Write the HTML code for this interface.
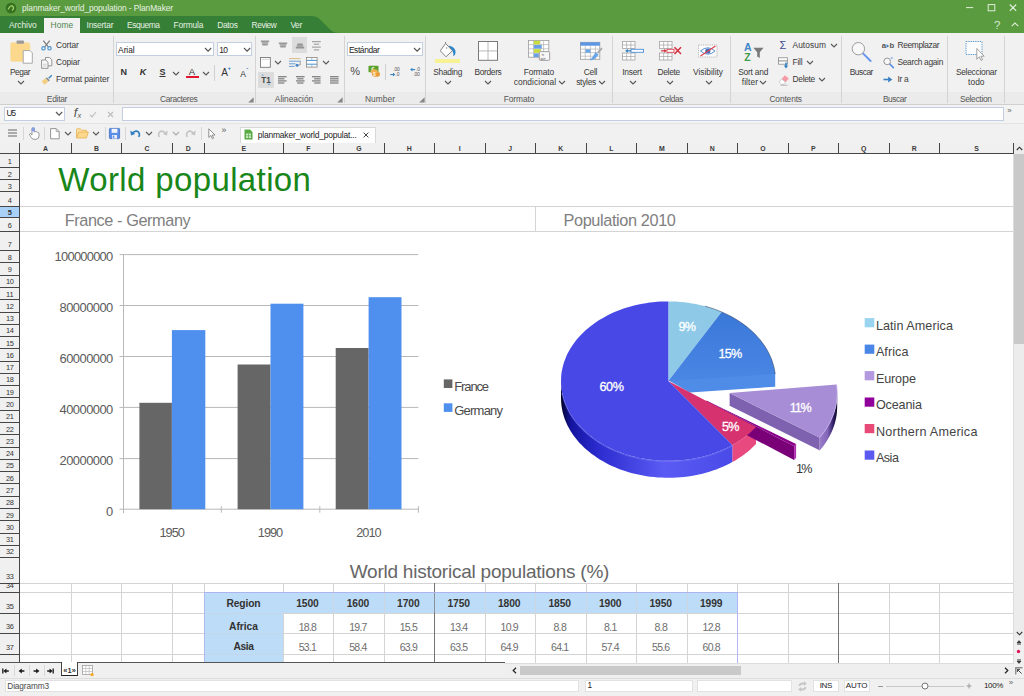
<!DOCTYPE html>
<html lang="es"><head><meta charset="utf-8"><title>planmaker_world_population - PlanMaker</title>
<style>
html,body{margin:0;padding:0}
body{width:1024px;height:696px;position:relative;overflow:hidden;background:#f0f0f0;font-family:"Liberation Sans",sans-serif}
.t{position:absolute;white-space:pre;margin:0}
.b{position:absolute;display:block}
svg{overflow:visible}
</style></head>
<body>
<div class="b" style="left:0px;top:142.5px;width:1024px;height:520.1px;background:#fff;"></div>
<div class="b" style="left:20px;top:206px;width:994px;height:1px;background:#d4d4d4;"></div>
<div class="b" style="left:20px;top:231px;width:994px;height:1px;background:#d4d4d4;"></div>
<div class="b" style="left:535px;top:206px;width:1px;height:25px;background:#d4d4d4;"></div>
<div class="b" style="left:20px;top:583px;width:994px;height:1px;background:#d4d4d4;"></div>
<div class="b" style="left:20px;top:592px;width:994px;height:1px;background:#d4d4d4;"></div>
<div class="b" style="left:20px;top:613px;width:994px;height:1px;background:#d4d4d4;"></div>
<div class="b" style="left:20px;top:633px;width:994px;height:1px;background:#d4d4d4;"></div>
<div class="b" style="left:20px;top:654px;width:994px;height:1px;background:#d4d4d4;"></div>
<div class="b" style="left:71px;top:583px;width:1px;height:79.60000000000002px;background:#d4d4d4;"></div>
<div class="b" style="left:121px;top:583px;width:1px;height:79.60000000000002px;background:#d4d4d4;"></div>
<div class="b" style="left:172px;top:583px;width:1px;height:79.60000000000002px;background:#d4d4d4;"></div>
<div class="b" style="left:204px;top:583px;width:1px;height:79.60000000000002px;background:#d4d4d4;"></div>
<div class="b" style="left:283px;top:583px;width:1px;height:79.60000000000002px;background:#d4d4d4;"></div>
<div class="b" style="left:333px;top:583px;width:1px;height:79.60000000000002px;background:#d4d4d4;"></div>
<div class="b" style="left:384px;top:583px;width:1px;height:79.60000000000002px;background:#d4d4d4;"></div>
<div class="b" style="left:434px;top:583px;width:1px;height:79.60000000000002px;background:#747474;"></div>
<div class="b" style="left:485px;top:583px;width:1px;height:79.60000000000002px;background:#d4d4d4;"></div>
<div class="b" style="left:535px;top:583px;width:1px;height:79.60000000000002px;background:#d4d4d4;"></div>
<div class="b" style="left:586px;top:583px;width:1px;height:79.60000000000002px;background:#d4d4d4;"></div>
<div class="b" style="left:636px;top:583px;width:1px;height:79.60000000000002px;background:#d4d4d4;"></div>
<div class="b" style="left:687px;top:583px;width:1px;height:79.60000000000002px;background:#d4d4d4;"></div>
<div class="b" style="left:737px;top:583px;width:1px;height:79.60000000000002px;background:#d4d4d4;"></div>
<div class="b" style="left:788px;top:583px;width:1px;height:79.60000000000002px;background:#d4d4d4;"></div>
<div class="b" style="left:838px;top:583px;width:1px;height:79.60000000000002px;background:#747474;"></div>
<div class="b" style="left:889px;top:583px;width:1px;height:79.60000000000002px;background:#d4d4d4;"></div>
<div class="b" style="left:939px;top:583px;width:1px;height:79.60000000000002px;background:#d4d4d4;"></div>
<div class="b" style="left:205px;top:592.5px;width:532px;height:20.5px;background:#bddcf8;"></div>
<div class="b" style="left:205px;top:592.5px;width:78px;height:70.1px;background:#bddcf8;"></div>
<div class="b" style="left:333px;top:593px;width:1px;height:20px;background:#ccd6e2;"></div>
<div class="b" style="left:384px;top:593px;width:1px;height:20px;background:#ccd6e2;"></div>
<div class="b" style="left:434px;top:593px;width:1px;height:20px;background:#8a8f98;"></div>
<div class="b" style="left:485px;top:593px;width:1px;height:20px;background:#ccd6e2;"></div>
<div class="b" style="left:535px;top:593px;width:1px;height:20px;background:#ccd6e2;"></div>
<div class="b" style="left:586px;top:593px;width:1px;height:20px;background:#ccd6e2;"></div>
<div class="b" style="left:636px;top:593px;width:1px;height:20px;background:#ccd6e2;"></div>
<div class="b" style="left:687px;top:593px;width:1px;height:20px;background:#ccd6e2;"></div>
<div class="b" style="left:205px;top:613px;width:78px;height:1px;background:#c4d6ea;"></div>
<div class="b" style="left:205px;top:633px;width:78px;height:1px;background:#c4d6ea;"></div>
<div class="b" style="left:205px;top:654px;width:78px;height:1px;background:#c4d6ea;"></div>
<div class="b" style="left:737px;top:592.5px;width:1px;height:70.1px;background:#b2b6f4;"></div>
<div class="b" style="left:204px;top:592px;width:534px;height:1px;background:#aeb4f2;"></div>
<div class="b" style="left:204px;top:592.5px;width:1px;height:70.1px;background:#aebcf0;"></div>
<div class="t" style="left:226.50px;top:596.60px;font-size:10.3px;line-height:14px;color:#333;letter-spacing:-0.151px;font-weight:700;">Region</div>
<div class="t" style="left:229.00px;top:620.20px;font-size:10.3px;line-height:14px;color:#333;letter-spacing:-0.031px;font-weight:700;">Africa</div>
<div class="t" style="left:233.50px;top:640.30px;font-size:10.3px;line-height:14px;color:#333;letter-spacing:-0.441px;font-weight:700;">Asia</div>
<div class="t" style="left:296.20px;top:596.60px;font-size:10.3px;line-height:14px;color:#333;letter-spacing:-0.105px;font-weight:700;">1500</div>
<div class="t" style="left:298.75px;top:619.70px;font-size:10.5px;line-height:15px;color:#6e6e6e;letter-spacing:-0.759px;">18.8</div>
<div class="t" style="left:298.75px;top:639.80px;font-size:10.5px;line-height:15px;color:#6e6e6e;letter-spacing:-0.759px;">53.1</div>
<div class="t" style="left:346.70px;top:596.60px;font-size:10.3px;line-height:14px;color:#333;letter-spacing:-0.105px;font-weight:700;">1600</div>
<div class="t" style="left:349.25px;top:619.70px;font-size:10.5px;line-height:15px;color:#6e6e6e;letter-spacing:-0.759px;">19.7</div>
<div class="t" style="left:349.25px;top:639.80px;font-size:10.5px;line-height:15px;color:#6e6e6e;letter-spacing:-0.759px;">58.4</div>
<div class="t" style="left:397.10px;top:596.60px;font-size:10.3px;line-height:14px;color:#333;letter-spacing:-0.105px;font-weight:700;">1700</div>
<div class="t" style="left:399.65px;top:619.70px;font-size:10.5px;line-height:15px;color:#6e6e6e;letter-spacing:-0.759px;">15.5</div>
<div class="t" style="left:399.65px;top:639.80px;font-size:10.5px;line-height:15px;color:#6e6e6e;letter-spacing:-0.759px;">63.9</div>
<div class="t" style="left:447.50px;top:596.60px;font-size:10.3px;line-height:14px;color:#333;letter-spacing:-0.105px;font-weight:700;">1750</div>
<div class="t" style="left:450.05px;top:619.70px;font-size:10.5px;line-height:15px;color:#6e6e6e;letter-spacing:-0.759px;">13.4</div>
<div class="t" style="left:450.05px;top:639.80px;font-size:10.5px;line-height:15px;color:#6e6e6e;letter-spacing:-0.759px;">63.5</div>
<div class="t" style="left:498.00px;top:596.60px;font-size:10.3px;line-height:14px;color:#333;letter-spacing:-0.105px;font-weight:700;">1800</div>
<div class="t" style="left:500.55px;top:619.70px;font-size:10.5px;line-height:15px;color:#6e6e6e;letter-spacing:-0.759px;">10.9</div>
<div class="t" style="left:500.55px;top:639.80px;font-size:10.5px;line-height:15px;color:#6e6e6e;letter-spacing:-0.759px;">64.9</div>
<div class="t" style="left:548.50px;top:596.60px;font-size:10.3px;line-height:14px;color:#333;letter-spacing:-0.105px;font-weight:700;">1850</div>
<div class="t" style="left:553.40px;top:619.70px;font-size:10.5px;line-height:15px;color:#6e6e6e;letter-spacing:-0.636px;">8.8</div>
<div class="t" style="left:551.05px;top:639.80px;font-size:10.5px;line-height:15px;color:#6e6e6e;letter-spacing:-0.759px;">64.1</div>
<div class="t" style="left:599.00px;top:596.60px;font-size:10.3px;line-height:14px;color:#333;letter-spacing:-0.105px;font-weight:700;">1900</div>
<div class="t" style="left:603.90px;top:619.70px;font-size:10.5px;line-height:15px;color:#6e6e6e;letter-spacing:-0.636px;">8.1</div>
<div class="t" style="left:601.55px;top:639.80px;font-size:10.5px;line-height:15px;color:#6e6e6e;letter-spacing:-0.759px;">57.4</div>
<div class="t" style="left:649.50px;top:596.60px;font-size:10.3px;line-height:14px;color:#333;letter-spacing:-0.105px;font-weight:700;">1950</div>
<div class="t" style="left:654.40px;top:619.70px;font-size:10.5px;line-height:15px;color:#6e6e6e;letter-spacing:-0.636px;">8.8</div>
<div class="t" style="left:652.05px;top:639.80px;font-size:10.5px;line-height:15px;color:#6e6e6e;letter-spacing:-0.759px;">55.6</div>
<div class="t" style="left:700.00px;top:596.60px;font-size:10.3px;line-height:14px;color:#333;letter-spacing:-0.105px;font-weight:700;">1999</div>
<div class="t" style="left:702.55px;top:619.70px;font-size:10.5px;line-height:15px;color:#6e6e6e;letter-spacing:-0.759px;">12.8</div>
<div class="t" style="left:702.55px;top:639.80px;font-size:10.5px;line-height:15px;color:#6e6e6e;letter-spacing:-0.759px;">60.8</div>
<div class="t" style="left:58.30px;top:158.50px;font-size:33px;line-height:42px;color:#188618;letter-spacing:0.371px;">World population</div>
<div class="t" style="left:64.70px;top:209.20px;font-size:16.3px;line-height:22px;color:#808080;letter-spacing:-0.407px;">France - Germany</div>
<div class="t" style="left:563.50px;top:209.20px;font-size:16.3px;line-height:22px;color:#808080;letter-spacing:-0.380px;">Population 2010</div>
<div class="t" style="left:349.70px;top:558.80px;font-size:19px;line-height:25px;color:#666;letter-spacing:-0.229px;">World historical populations (%)</div>
<div class="b" style="left:1013px;top:154px;width:1px;height:508.6px;background:#dcdcdc;"></div>
<div class="b" style="left:0px;top:142.5px;width:1024px;height:11px;background:#f0f0f0;"></div>
<div class="b" style="left:0px;top:153px;width:1024px;height:1px;background:#464646;"></div>
<div class="b" style="left:19px;top:142.5px;width:1px;height:11px;background:#464646;"></div>
<div class="b" style="left:71px;top:142.5px;width:1px;height:11px;background:#464646;"></div>
<div class="b" style="left:121px;top:142.5px;width:1px;height:11px;background:#464646;"></div>
<div class="b" style="left:172px;top:142.5px;width:1px;height:11px;background:#464646;"></div>
<div class="b" style="left:204px;top:142.5px;width:1px;height:11px;background:#464646;"></div>
<div class="b" style="left:283px;top:142.5px;width:1px;height:11px;background:#464646;"></div>
<div class="b" style="left:333px;top:142.5px;width:1px;height:11px;background:#464646;"></div>
<div class="b" style="left:384px;top:142.5px;width:1px;height:11px;background:#464646;"></div>
<div class="b" style="left:434px;top:142.5px;width:1px;height:11px;background:#464646;"></div>
<div class="b" style="left:485px;top:142.5px;width:1px;height:11px;background:#464646;"></div>
<div class="b" style="left:535px;top:142.5px;width:1px;height:11px;background:#464646;"></div>
<div class="b" style="left:586px;top:142.5px;width:1px;height:11px;background:#464646;"></div>
<div class="b" style="left:636px;top:142.5px;width:1px;height:11px;background:#464646;"></div>
<div class="b" style="left:687px;top:142.5px;width:1px;height:11px;background:#464646;"></div>
<div class="b" style="left:737px;top:142.5px;width:1px;height:11px;background:#464646;"></div>
<div class="b" style="left:788px;top:142.5px;width:1px;height:11px;background:#464646;"></div>
<div class="b" style="left:838px;top:142.5px;width:1px;height:11px;background:#464646;"></div>
<div class="b" style="left:889px;top:142.5px;width:1px;height:11px;background:#464646;"></div>
<div class="b" style="left:939px;top:142.5px;width:1px;height:11px;background:#464646;"></div>
<div class="b" style="left:1013px;top:142.5px;width:1px;height:11px;background:#464646;"></div>
<div class="t" style="left:43.06px;top:143.80px;font-size:6.9px;line-height:10px;color:#3a3a3a;font-weight:700;">A</div>
<div class="t" style="left:94.01px;top:143.80px;font-size:6.9px;line-height:10px;color:#3a3a3a;font-weight:700;">B</div>
<div class="t" style="left:144.41px;top:143.80px;font-size:6.9px;line-height:10px;color:#3a3a3a;font-weight:700;">C</div>
<div class="t" style="left:185.76px;top:143.80px;font-size:6.9px;line-height:10px;color:#3a3a3a;font-weight:700;">D</div>
<div class="t" style="left:241.45px;top:143.80px;font-size:6.9px;line-height:10px;color:#3a3a3a;font-weight:700;">E</div>
<div class="t" style="left:306.34px;top:143.80px;font-size:6.9px;line-height:10px;color:#3a3a3a;font-weight:700;">F</div>
<div class="t" style="left:356.26px;top:143.80px;font-size:6.9px;line-height:10px;color:#3a3a3a;font-weight:700;">G</div>
<div class="t" style="left:406.86px;top:143.80px;font-size:6.9px;line-height:10px;color:#3a3a3a;font-weight:700;">H</div>
<div class="t" style="left:458.79px;top:143.80px;font-size:6.9px;line-height:10px;color:#3a3a3a;font-weight:700;">I</div>
<div class="t" style="left:508.33px;top:143.80px;font-size:6.9px;line-height:10px;color:#3a3a3a;font-weight:700;">J</div>
<div class="t" style="left:558.26px;top:143.80px;font-size:6.9px;line-height:10px;color:#3a3a3a;font-weight:700;">K</div>
<div class="t" style="left:609.14px;top:143.80px;font-size:6.9px;line-height:10px;color:#3a3a3a;font-weight:700;">L</div>
<div class="t" style="left:658.88px;top:143.80px;font-size:6.9px;line-height:10px;color:#3a3a3a;font-weight:700;">M</div>
<div class="t" style="left:709.76px;top:143.80px;font-size:6.9px;line-height:10px;color:#3a3a3a;font-weight:700;">N</div>
<div class="t" style="left:760.16px;top:143.80px;font-size:6.9px;line-height:10px;color:#3a3a3a;font-weight:700;">O</div>
<div class="t" style="left:811.05px;top:143.80px;font-size:6.9px;line-height:10px;color:#3a3a3a;font-weight:700;">P</div>
<div class="t" style="left:861.06px;top:143.80px;font-size:6.9px;line-height:10px;color:#3a3a3a;font-weight:700;">Q</div>
<div class="t" style="left:911.81px;top:143.80px;font-size:6.9px;line-height:10px;color:#3a3a3a;font-weight:700;">R</div>
<div class="t" style="left:974.25px;top:143.80px;font-size:6.9px;line-height:10px;color:#3a3a3a;font-weight:700;">S</div>
<div class="b" style="left:0px;top:154px;width:19.5px;height:508.6px;background:#f0f0f0;"></div>
<div class="b" style="left:0px;top:206.5px;width:19.5px;height:11.2px;background:#a9d1f7;"></div>
<div class="b" style="left:19px;top:143px;width:1px;height:519.6px;background:#464646;"></div>
<div class="b" style="left:0px;top:167px;width:19.5px;height:1px;background:#464646;"></div>
<div class="b" style="left:0px;top:179px;width:19.5px;height:1px;background:#464646;"></div>
<div class="b" style="left:0px;top:191px;width:19.5px;height:1px;background:#464646;"></div>
<div class="b" style="left:0px;top:206px;width:19.5px;height:1px;background:#464646;"></div>
<div class="b" style="left:0px;top:217px;width:19.5px;height:1px;background:#464646;"></div>
<div class="b" style="left:0px;top:231px;width:19.5px;height:1px;background:#464646;"></div>
<div class="b" style="left:0px;top:250px;width:19.5px;height:1px;background:#464646;"></div>
<div class="b" style="left:0px;top:262px;width:19.5px;height:1px;background:#464646;"></div>
<div class="b" style="left:0px;top:275px;width:19.5px;height:1px;background:#464646;"></div>
<div class="b" style="left:0px;top:287px;width:19.5px;height:1px;background:#464646;"></div>
<div class="b" style="left:0px;top:299px;width:19.5px;height:1px;background:#464646;"></div>
<div class="b" style="left:0px;top:312px;width:19.5px;height:1px;background:#464646;"></div>
<div class="b" style="left:0px;top:324px;width:19.5px;height:1px;background:#464646;"></div>
<div class="b" style="left:0px;top:336px;width:19.5px;height:1px;background:#464646;"></div>
<div class="b" style="left:0px;top:348px;width:19.5px;height:1px;background:#464646;"></div>
<div class="b" style="left:0px;top:361px;width:19.5px;height:1px;background:#464646;"></div>
<div class="b" style="left:0px;top:373px;width:19.5px;height:1px;background:#464646;"></div>
<div class="b" style="left:0px;top:385px;width:19.5px;height:1px;background:#464646;"></div>
<div class="b" style="left:0px;top:397px;width:19.5px;height:1px;background:#464646;"></div>
<div class="b" style="left:0px;top:410px;width:19.5px;height:1px;background:#464646;"></div>
<div class="b" style="left:0px;top:422px;width:19.5px;height:1px;background:#464646;"></div>
<div class="b" style="left:0px;top:434px;width:19.5px;height:1px;background:#464646;"></div>
<div class="b" style="left:0px;top:447px;width:19.5px;height:1px;background:#464646;"></div>
<div class="b" style="left:0px;top:459px;width:19.5px;height:1px;background:#464646;"></div>
<div class="b" style="left:0px;top:471px;width:19.5px;height:1px;background:#464646;"></div>
<div class="b" style="left:0px;top:483px;width:19.5px;height:1px;background:#464646;"></div>
<div class="b" style="left:0px;top:496px;width:19.5px;height:1px;background:#464646;"></div>
<div class="b" style="left:0px;top:508px;width:19.5px;height:1px;background:#464646;"></div>
<div class="b" style="left:0px;top:520px;width:19.5px;height:1px;background:#464646;"></div>
<div class="b" style="left:0px;top:533px;width:19.5px;height:1px;background:#464646;"></div>
<div class="b" style="left:0px;top:545px;width:19.5px;height:1px;background:#464646;"></div>
<div class="b" style="left:0px;top:557px;width:19.5px;height:1px;background:#464646;"></div>
<div class="b" style="left:0px;top:583px;width:19.5px;height:1px;background:#464646;"></div>
<div class="b" style="left:0px;top:592px;width:19.5px;height:1px;background:#464646;"></div>
<div class="b" style="left:0px;top:613px;width:19.5px;height:1px;background:#464646;"></div>
<div class="b" style="left:0px;top:633px;width:19.5px;height:1px;background:#464646;"></div>
<div class="b" style="left:0px;top:654px;width:19.5px;height:1px;background:#464646;"></div>
<div class="t" style="left:7.64px;top:156.17px;font-size:7.4px;line-height:11px;color:#333;">1</div>
<div class="t" style="left:7.64px;top:168.60px;font-size:7.4px;line-height:11px;color:#333;">2</div>
<div class="t" style="left:7.64px;top:180.70px;font-size:7.4px;line-height:11px;color:#333;">3</div>
<div class="t" style="left:7.64px;top:194.83px;font-size:7.4px;line-height:11px;color:#333;">4</div>
<div class="t" style="left:7.64px;top:206.60px;font-size:7.4px;line-height:11px;color:#333;font-weight:700;">5</div>
<div class="t" style="left:7.64px;top:220.12px;font-size:7.4px;line-height:11px;color:#333;">6</div>
<div class="t" style="left:7.64px;top:238.52px;font-size:7.4px;line-height:11px;color:#333;">7</div>
<div class="t" style="left:7.64px;top:251.68px;font-size:7.4px;line-height:11px;color:#333;">8</div>
<div class="t" style="left:7.64px;top:263.96px;font-size:7.4px;line-height:11px;color:#333;">9</div>
<div class="t" style="left:6.00px;top:276.24px;font-size:7.4px;line-height:11px;color:#333;letter-spacing:-0.417px;">10</div>
<div class="t" style="left:6.00px;top:288.52px;font-size:7.4px;line-height:11px;color:#333;letter-spacing:-0.136px;">11</div>
<div class="t" style="left:6.00px;top:300.80px;font-size:7.4px;line-height:11px;color:#333;letter-spacing:-0.417px;">12</div>
<div class="t" style="left:6.00px;top:313.08px;font-size:7.4px;line-height:11px;color:#333;letter-spacing:-0.417px;">13</div>
<div class="t" style="left:6.00px;top:325.36px;font-size:7.4px;line-height:11px;color:#333;letter-spacing:-0.417px;">14</div>
<div class="t" style="left:6.00px;top:337.64px;font-size:7.4px;line-height:11px;color:#333;letter-spacing:-0.417px;">15</div>
<div class="t" style="left:6.00px;top:349.92px;font-size:7.4px;line-height:11px;color:#333;letter-spacing:-0.417px;">16</div>
<div class="t" style="left:6.00px;top:362.20px;font-size:7.4px;line-height:11px;color:#333;letter-spacing:-0.417px;">17</div>
<div class="t" style="left:6.00px;top:374.48px;font-size:7.4px;line-height:11px;color:#333;letter-spacing:-0.417px;">18</div>
<div class="t" style="left:6.00px;top:386.76px;font-size:7.4px;line-height:11px;color:#333;letter-spacing:-0.417px;">19</div>
<div class="t" style="left:6.00px;top:399.04px;font-size:7.4px;line-height:11px;color:#333;letter-spacing:-0.417px;">20</div>
<div class="t" style="left:6.00px;top:411.32px;font-size:7.4px;line-height:11px;color:#333;letter-spacing:-0.417px;">21</div>
<div class="t" style="left:6.00px;top:423.60px;font-size:7.4px;line-height:11px;color:#333;letter-spacing:-0.417px;">22</div>
<div class="t" style="left:6.00px;top:435.88px;font-size:7.4px;line-height:11px;color:#333;letter-spacing:-0.417px;">23</div>
<div class="t" style="left:6.00px;top:448.16px;font-size:7.4px;line-height:11px;color:#333;letter-spacing:-0.417px;">24</div>
<div class="t" style="left:6.00px;top:460.44px;font-size:7.4px;line-height:11px;color:#333;letter-spacing:-0.417px;">25</div>
<div class="t" style="left:6.00px;top:472.72px;font-size:7.4px;line-height:11px;color:#333;letter-spacing:-0.417px;">26</div>
<div class="t" style="left:6.00px;top:485.00px;font-size:7.4px;line-height:11px;color:#333;letter-spacing:-0.417px;">27</div>
<div class="t" style="left:6.00px;top:497.28px;font-size:7.4px;line-height:11px;color:#333;letter-spacing:-0.417px;">28</div>
<div class="t" style="left:6.00px;top:509.56px;font-size:7.4px;line-height:11px;color:#333;letter-spacing:-0.417px;">29</div>
<div class="t" style="left:6.00px;top:521.84px;font-size:7.4px;line-height:11px;color:#333;letter-spacing:-0.417px;">30</div>
<div class="t" style="left:6.00px;top:534.12px;font-size:7.4px;line-height:11px;color:#333;letter-spacing:-0.417px;">31</div>
<div class="t" style="left:6.00px;top:546.40px;font-size:7.4px;line-height:11px;color:#333;letter-spacing:-0.417px;">32</div>
<div class="t" style="left:6.00px;top:570.53px;font-size:7.4px;line-height:11px;color:#333;letter-spacing:-0.417px;">33</div>
<div class="t" style="left:6.00px;top:579.60px;font-size:7.4px;line-height:11px;color:#333;letter-spacing:-0.417px;">34</div>
<div class="t" style="left:6.00px;top:600.81px;font-size:7.4px;line-height:11px;color:#333;letter-spacing:-0.417px;">35</div>
<div class="t" style="left:6.00px;top:621.33px;font-size:7.4px;line-height:11px;color:#333;letter-spacing:-0.417px;">36</div>
<div class="t" style="left:6.00px;top:641.92px;font-size:7.4px;line-height:11px;color:#333;letter-spacing:-0.417px;">37</div>
<svg class="b" style="left:0;top:0" width="1024" height="696" viewBox="0 0 1024 696"><path d="M119.5 254.6 H418.4" stroke="#b8b8b8" stroke-width="1"/><text x="113.2" y="261.0" font-family="Liberation Sans, sans-serif" font-size="12.9" fill="#5c5c5c" text-anchor="end" textLength="58.6" lengthAdjust="spacing">100000000</text><path d="M119.5 305.5 H418.4" stroke="#b8b8b8" stroke-width="1"/><text x="113.2" y="311.9" font-family="Liberation Sans, sans-serif" font-size="12.9" fill="#5c5c5c" text-anchor="end" textLength="53.6" lengthAdjust="spacing">80000000</text><path d="M119.5 356.5 H418.4" stroke="#b8b8b8" stroke-width="1"/><text x="113.2" y="362.9" font-family="Liberation Sans, sans-serif" font-size="12.9" fill="#5c5c5c" text-anchor="end" textLength="53.6" lengthAdjust="spacing">60000000</text><path d="M119.5 407.4 H418.4" stroke="#b8b8b8" stroke-width="1"/><text x="113.2" y="413.79999999999995" font-family="Liberation Sans, sans-serif" font-size="12.9" fill="#5c5c5c" text-anchor="end" textLength="53.6" lengthAdjust="spacing">40000000</text><path d="M119.5 458.6 H418.4" stroke="#b8b8b8" stroke-width="1"/><text x="113.2" y="465.0" font-family="Liberation Sans, sans-serif" font-size="12.9" fill="#5c5c5c" text-anchor="end" textLength="53.6" lengthAdjust="spacing">20000000</text><path d="M119.5 509.2 H418.4" stroke="#b8b8b8" stroke-width="1"/><text x="113.2" y="515.6" font-family="Liberation Sans, sans-serif" font-size="12.9" fill="#5c5c5c" text-anchor="end" textLength="6.4" lengthAdjust="spacing">0</text><path d="M123.5 254.6 V513.2" stroke="#b8b8b8" stroke-width="1"/><path d="M221.3 506.2 V512.7" stroke="#b8b8b8" stroke-width="1"/><path d="M319.8 506.2 V512.7" stroke="#b8b8b8" stroke-width="1"/><path d="M418.4 506.2 V512.7" stroke="#b8b8b8" stroke-width="1"/><rect x="139.4" y="402.8" width="32.5" height="106.4" fill="#666666"/><rect x="171.9" y="330.1" width="33.4" height="179.1" fill="#4f8fee"/><rect x="237.6" y="364.5" width="32.9" height="144.7" fill="#666666"/><rect x="270.5" y="303.7" width="32.9" height="205.5" fill="#4f8fee"/><rect x="335.7" y="348" width="32.9" height="161.2" fill="#666666"/><rect x="368.6" y="297.2" width="32.9" height="212.0" fill="#4f8fee"/><text x="172.20000000000002" y="537.3" font-family="Liberation Sans, sans-serif" font-size="12.8" fill="#5c5c5c" text-anchor="middle" textLength="25.4" lengthAdjust="spacing">1950</text><text x="270.5" y="537.3" font-family="Liberation Sans, sans-serif" font-size="12.8" fill="#5c5c5c" text-anchor="middle" textLength="25.4" lengthAdjust="spacing">1990</text><text x="368.90000000000003" y="537.3" font-family="Liberation Sans, sans-serif" font-size="12.8" fill="#5c5c5c" text-anchor="middle" textLength="25.4" lengthAdjust="spacing">2010</text><rect x="443.8" y="379.4" width="8.6" height="8.6" fill="#666666"/><text x="454.3" y="390.6" font-family="Liberation Sans, sans-serif" font-size="13" fill="#4a4a4a" textLength="34.8" lengthAdjust="spacing">France</text><rect x="443.8" y="403.3" width="8.6" height="8.6" fill="#4f8fee"/><text x="454.3" y="414.6" font-family="Liberation Sans, sans-serif" font-size="13" fill="#4a4a4a" textLength="48.7" lengthAdjust="spacing">Germany</text><defs><linearGradient id="gAsia" x1="0" x2="1" y1="0" y2="0"><stop offset="0" stop-color="#02022c"/><stop offset="0.06" stop-color="#1414a0"/><stop offset="0.22" stop-color="#2c2cd0"/><stop offset="0.6" stop-color="#5a5af4"/><stop offset="1" stop-color="#4a4ae8"/></linearGradient><linearGradient id="gEu" x1="0" x2="1" y1="0" y2="0"><stop offset="0" stop-color="#9a7ccc"/><stop offset="0.45" stop-color="#8466b8"/><stop offset="0.8" stop-color="#2a1a60"/><stop offset="1" stop-color="#08041c"/></linearGradient><linearGradient id="gAfT" x1="0" x2="0" y1="0" y2="1"><stop offset="0" stop-color="#3a78d8"/><stop offset="1" stop-color="#4a86e4"/></linearGradient></defs><path d="M668.3 380.3 L775.2 373.1 L775.2 386.7 L689.9 392.4 Z" fill="#4f8ce8" /><path d="M668.3 381.1 L668.3 301.4 L672.3 301.5 L676.3 301.6 L680.2 301.9 L684.2 302.3 L688.1 302.8 L692.0 303.4 L695.9 304.1 L699.7 304.9 L703.5 305.8 L707.3 306.8 L710.9 308.0 L714.6 309.2 L718.1 310.5 L721.6 311.9 Z" fill="#8ecae8" /><path d="M668.3 381.1 L721.6 311.9 L724.9 313.4 L728.1 314.9 L731.2 316.5 L734.3 318.3 L737.2 320.0 L740.1 321.9 L742.9 323.8 L745.6 325.8 L748.2 327.9 L750.7 330.1 L753.1 332.3 L755.4 334.5 L757.5 336.9 L759.6 339.2 L761.6 341.7 L763.4 344.2 L765.1 346.7 L766.7 349.3 L768.1 351.9 L769.5 354.5 L770.7 357.2 L771.8 360.0 L772.7 362.7 L773.5 365.5 L774.2 368.3 L774.7 371.1 L775.2 373.9 Z" fill="url(#gAfT)" /><path d="M705.0 306.2 L708.5 307.2 L712.0 308.3 L715.5 309.5 L718.8 310.8 L722.2 312.2 L725.4 313.6 L728.6 315.2 L731.7 316.8 L734.7 318.5 L737.6 320.3 L740.5 322.1 L743.2 324.1 L745.9 326.1 L748.5 328.1 L750.9 330.3 L753.3 332.5 L755.6 334.7 L757.7 337.1 L759.8 339.4 L761.7 341.9 L763.5 344.3 L765.2 346.9 L766.8 349.4 L768.2 352.0 L769.5 354.7 L770.7 357.3 L771.8 360.0 L772.7 362.8 L773.5 365.5 L774.2 368.3 L774.7 371.1 L775.2 373.9" fill="none" stroke="#1a2a50" stroke-width="0.7" opacity="0.7"/><path d="M756.0 427.0 L753.7 429.3 L751.4 431.5 L749.0 433.7 L746.4 435.7 L743.8 437.8 L741.0 439.7 L738.2 441.6 L735.3 443.4 L732.3 445.1 L732.3 462.1 L735.3 460.4 L738.2 458.6 L741.0 456.7 L743.8 454.8 L746.4 452.7 L749.0 450.7 L751.4 448.5 L753.7 446.3 L756.0 444.0 Z" fill="#e84a80" /><path d="M732.3 445.1 L729.2 446.7 L726.1 448.3 L722.9 449.7 L719.6 451.1 L716.3 452.4 L712.9 453.6 L709.4 454.7 L705.9 455.7 L702.4 456.7 L698.8 457.5 L695.2 458.3 L691.5 458.9 L687.8 459.5 L684.1 459.9 L680.4 460.3 L676.6 460.6 L672.9 460.7 L669.1 460.8 L665.3 460.8 L661.6 460.6 L657.8 460.4 L654.1 460.1 L650.4 459.7 L646.7 459.2 L643.0 458.6 L639.4 457.8 L635.8 457.0 L632.2 456.2 L628.7 455.2 L625.2 454.1 L621.8 452.9 L618.4 451.7 L615.1 450.3 L611.9 448.9 L608.7 447.4 L605.6 445.8 L602.6 444.1 L599.7 442.4 L596.8 440.5 L594.1 438.6 L591.4 436.7 L588.8 434.6 L586.3 432.5 L584.0 430.4 L581.7 428.1 L579.5 425.9 L577.5 423.5 L575.5 421.1 L573.7 418.7 L572.0 416.2 L570.4 413.7 L568.9 411.1 L567.5 408.5 L566.3 405.8 L565.2 403.2 L564.2 400.5 L563.4 397.7 L562.6 395.0 L562.1 392.2 L561.6 389.5 L561.3 386.7 L561.1 383.9 L561.0 381.1 L561.0 398.1 L561.1 400.9 L561.3 403.7 L561.6 406.5 L562.1 409.2 L562.6 412.0 L563.4 414.7 L564.2 417.5 L565.2 420.2 L566.3 422.8 L567.5 425.5 L568.9 428.1 L570.4 430.7 L572.0 433.2 L573.7 435.7 L575.5 438.1 L577.5 440.5 L579.5 442.9 L581.7 445.1 L584.0 447.4 L586.3 449.5 L588.8 451.6 L591.4 453.7 L594.1 455.6 L596.8 457.5 L599.7 459.4 L602.6 461.1 L605.6 462.8 L608.7 464.4 L611.9 465.9 L615.1 467.3 L618.4 468.7 L621.8 469.9 L625.2 471.1 L628.7 472.2 L632.2 473.2 L635.8 474.0 L639.4 474.8 L643.0 475.6 L646.7 476.2 L650.4 476.7 L654.1 477.1 L657.8 477.4 L661.6 477.6 L665.3 477.8 L669.1 477.8 L672.9 477.7 L676.6 477.6 L680.4 477.3 L684.1 476.9 L687.8 476.5 L691.5 475.9 L695.2 475.3 L698.8 474.5 L702.4 473.7 L705.9 472.7 L709.4 471.7 L712.9 470.6 L716.3 469.4 L719.6 468.1 L722.9 466.7 L726.1 465.3 L729.2 463.7 L732.3 462.1 Z" fill="url(#gAsia)" /><path d="M706.4 400.4 L794.1 446.3 L794.1 459.9 L706.4 414.0 Z" fill="#7a0078" /><path d="M796.1 444.1 L794.1 446.3 L794.1 459.9 L796.1 457.7 Z" fill="#b030b0" /><path d="M706.4 400.4 L796.1 444.1 L794.1 446.3 Z" fill="#8a008a" /><path d="M668.3 381.1 L756.0 427.0 L753.7 429.3 L751.4 431.5 L749.0 433.7 L746.4 435.7 L743.8 437.8 L741.0 439.7 L738.2 441.6 L735.3 443.4 L732.3 445.1 Z" fill="#d63270" /><path d="M668.3 381.1 L732.3 445.1 L729.2 446.7 L726.1 448.3 L722.9 449.7 L719.6 451.1 L716.3 452.4 L712.9 453.6 L709.5 454.7 L706.0 455.7 L702.4 456.7 L698.9 457.5 L695.2 458.2 L691.6 458.9 L687.9 459.5 L684.2 459.9 L680.5 460.3 L676.7 460.6 L673.0 460.7 L669.2 460.8 L665.5 460.8 L661.7 460.7 L658.0 460.4 L654.3 460.1 L650.5 459.7 L646.8 459.2 L643.2 458.6 L639.5 457.9 L635.9 457.1 L632.4 456.2 L628.9 455.2 L625.4 454.2 L622.0 453.0 L618.6 451.7 L615.3 450.4 L612.1 449.0 L608.9 447.5 L605.8 445.9 L602.8 444.2 L599.9 442.5 L597.0 440.7 L594.3 438.8 L591.6 436.8 L589.0 434.8 L586.5 432.7 L584.2 430.6 L581.9 428.3 L579.7 426.1 L577.6 423.7 L575.7 421.4 L573.8 418.9 L572.1 416.4 L570.5 413.9 L569.0 411.4 L567.7 408.8 L566.4 406.1 L565.3 403.5 L564.3 400.8 L563.5 398.1 L562.7 395.3 L562.1 392.6 L561.6 389.8 L561.3 387.0 L561.1 384.2 L561.0 381.4 L561.1 378.7 L561.2 375.9 L561.5 373.1 L562.0 370.3 L562.6 367.6 L563.3 364.8 L564.1 362.1 L565.1 359.4 L566.1 356.7 L567.3 354.1 L568.7 351.5 L570.1 348.9 L571.7 346.4 L573.4 343.9 L575.2 341.5 L577.1 339.1 L579.2 336.7 L581.3 334.4 L583.6 332.2 L585.9 330.0 L588.4 327.9 L590.9 325.9 L593.6 323.9 L596.3 322.0 L599.2 320.1 L602.1 318.4 L605.1 316.7 L608.2 315.1 L611.3 313.6 L614.5 312.1 L617.8 310.8 L621.1 309.5 L624.5 308.3 L628.0 307.2 L631.5 306.2 L635.1 305.3 L638.6 304.5 L642.3 303.8 L645.9 303.2 L649.6 302.6 L653.3 302.2 L657.1 301.8 L660.8 301.6 L664.5 301.4 L668.3 301.4 Z" fill="#4848e6" /><path d="M732.3 445.9 L729.2 447.5 L726.1 449.1 L722.9 450.5 L719.6 451.9 L716.3 453.2 L712.9 454.4 L709.4 455.5 L705.9 456.5 L702.4 457.5 L698.8 458.3 L695.1 459.1 L691.5 459.7 L687.8 460.3 L684.1 460.7 L680.3 461.1 L676.6 461.4 L672.8 461.5 L669.1 461.6 L665.3 461.6 L661.6 461.4 L657.8 461.2 L654.1 460.9 L650.3 460.5 L646.6 460.0 L643.0 459.3 L639.3 458.6 L635.7 457.8 L632.2 456.9 L628.6 456.0 L625.2 454.9 L621.7 453.7 L618.4 452.4 L615.1 451.1 L611.8 449.7 L608.7 448.2 L605.6 446.6 L602.6 444.9 L599.6 443.1 L596.8 441.3 L594.0 439.4 L591.4 437.4 L588.8 435.4 L586.3 433.3 L583.9 431.1 L581.6 428.9 L579.5 426.6 L577.4 424.3 L575.5 421.9 L573.6 419.4 L571.9 417.0 L570.3 414.4 L568.9 411.8 L567.5 409.2 L566.3 406.6 L565.2 403.9 L564.2 401.2 L563.4 398.5 L562.6 395.8 L562.0 393.0" fill="none" stroke="#7a7af8" stroke-width="1" opacity="0.6"/><path d="M837.2 393.1 L837.1 396.0 L836.9 399.0 L836.6 401.9 L836.1 404.8 L835.4 407.7 L834.7 410.6 L833.7 413.5 L832.7 416.3 L831.5 419.1 L830.2 421.9 L828.7 424.6 L827.1 427.3 L825.4 429.9 L823.6 432.5 L821.6 435.1 L819.5 437.6 L819.5 450.8 L821.6 448.3 L823.6 445.7 L825.4 443.1 L827.1 440.5 L828.7 437.8 L830.2 435.1 L831.5 432.3 L832.7 429.5 L833.7 426.7 L834.7 423.8 L835.4 420.9 L836.1 418.0 L836.6 415.1 L836.9 412.2 L837.1 409.2 L837.2 406.3 Z" fill="url(#gEu)" /><path d="M729.6 393.1 L819.5 437.6 L819.5 450.2 L729.6 405.7 Z" fill="#7e62b0" /><path d="M729.6 393.1 L836.6 384.6 L836.9 387.5 L837.1 390.5 L837.2 393.4 L837.1 396.3 L836.9 399.2 L836.5 402.1 L836.0 405.0 L835.4 407.9 L834.6 410.8 L833.7 413.6 L832.6 416.4 L831.4 419.2 L830.1 422.0 L828.7 424.7 L827.1 427.4 L825.4 430.0 L823.6 432.6 L821.6 435.1 L819.5 437.6 Z" fill="#a78cd6" /><path d="M836.6 384.6 L836.9 387.5 L837.1 390.5 L837.2 393.4 L837.1 396.3 L836.9 399.2 L836.5 402.1 L836.0 405.0 L835.4 407.9 L834.6 410.8 L833.7 413.6 L832.6 416.4 L831.4 419.2 L830.1 422.0 L828.7 424.7 L827.1 427.4 L825.4 430.0 L823.6 432.6 L821.6 435.1 L819.5 437.6" fill="none" stroke="#c8b4ec" stroke-width="0.8"/><text x="687.3" y="331" font-family="Liberation Sans, sans-serif" font-size="12.6" fill="#ffffff" text-anchor="middle" stroke="#ffffff" stroke-width="0.3" textLength="17.4" lengthAdjust="spacing">9%</text><text x="730.4" y="358" font-family="Liberation Sans, sans-serif" font-size="12.6" fill="#ffffff" text-anchor="middle" stroke="#ffffff" stroke-width="0.3" textLength="23.8" lengthAdjust="spacing">15%</text><text x="800.8" y="411.9" font-family="Liberation Sans, sans-serif" font-size="12.6" fill="#ffffff" text-anchor="middle" stroke="#ffffff" stroke-width="0.3" textLength="22" lengthAdjust="spacing">11%</text><text x="730.8" y="431" font-family="Liberation Sans, sans-serif" font-size="12.6" fill="#ffffff" text-anchor="middle" stroke="#ffffff" stroke-width="0.3" textLength="17.4" lengthAdjust="spacing">5%</text><text x="611.7" y="390.8" font-family="Liberation Sans, sans-serif" font-size="12.6" fill="#ffffff" text-anchor="middle" stroke="#ffffff" stroke-width="0.3" textLength="24.6" lengthAdjust="spacing">60%</text><text x="796" y="473.2" font-family="Liberation Sans, sans-serif" font-size="12.6" fill="#333" textLength="5.6" lengthAdjust="spacing">1</text><text x="801.2" y="473.2" font-family="Liberation Sans, sans-serif" font-size="12.6" fill="#333" textLength="10.6" lengthAdjust="spacing">%</text><rect x="864.7" y="318.1" width="9.6" height="9.2" fill="#9ad4f0"/><text x="875.9" y="329.8" font-family="Liberation Sans, sans-serif" font-size="12.6" fill="#444" textLength="77" lengthAdjust="spacing">Latin America</text><rect x="864.7" y="344.6" width="9.6" height="9.2" fill="#4a86e6"/><text x="875.9" y="356.28000000000003" font-family="Liberation Sans, sans-serif" font-size="12.6" fill="#444" textLength="32.5" lengthAdjust="spacing">Africa</text><rect x="864.7" y="371.1" width="9.6" height="9.2" fill="#b39ae0"/><text x="875.9" y="382.76" font-family="Liberation Sans, sans-serif" font-size="12.6" fill="#444" textLength="40" lengthAdjust="spacing">Europe</text><rect x="864.7" y="397.5" width="9.6" height="9.2" fill="#90009a"/><text x="875.9" y="409.24" font-family="Liberation Sans, sans-serif" font-size="12.6" fill="#444" textLength="46" lengthAdjust="spacing">Oceania</text><rect x="864.7" y="424.0" width="9.6" height="9.2" fill="#e84a78"/><text x="875.9" y="435.72" font-family="Liberation Sans, sans-serif" font-size="12.6" fill="#444" textLength="101.5" lengthAdjust="spacing">Northern America</text><rect x="864.7" y="450.5" width="9.6" height="9.2" fill="#5a5af0"/><text x="875.9" y="462.2" font-family="Liberation Sans, sans-serif" font-size="12.6" fill="#444" textLength="23" lengthAdjust="spacing">Asia</text></svg>
<div class="b" style="left:0px;top:0px;width:1024px;height:33px;background:#5a9b3f;"></div>
<svg class="b" style="left:0px;top:16px;" width="345" height="18" viewBox="0 0 345 18"><path d="M0 0 L311 0 Q316.5 0 319.5 3 L330.5 14 Q333.5 17 339 17 L0 17 Z" fill="#357f36"/></svg>
<svg class="b" style="left:5.2px;top:1.8px;" width="12" height="12" viewBox="0 0 12 12"><circle cx="6" cy="6" r="5.3" fill="#34701f"/><path d="M3 7.5 Q6 2 8 4.5 Q9.5 6.5 7 8.5" fill="none" stroke="#9ccc65" stroke-width="1.3"/></svg>
<div class="t" style="left:22.00px;top:2.30px;font-size:8.4px;line-height:12px;color:#e9f2e4;letter-spacing:-0.094px;">planmaker_world_population - PlanMaker</div>
<svg class="b" style="left:964px;top:3px;" width="56" height="10" viewBox="0 0 56 10"><path d="M2 4.6 H9.2" stroke="#e0eeda" stroke-width="1"/><rect x="24.2" y="1.6" width="6.6" height="6.2" fill="none" stroke="#e0eeda" stroke-width="1"/><path d="M45.8 1.5 L52.2 7.9 M52.2 1.5 L45.8 7.9" stroke="#e6f2e0" stroke-width="1.1"/></svg>
<div class="t" style="left:994.10px;top:16.60px;font-size:11.5px;line-height:16px;color:#dcebd6;">?</div>
<svg class="b" style="left:1010px;top:21px;" width="10" height="7" viewBox="0 0 10 7"><path d="M1.7 5.2 L5 2 L8.3 5.2" fill="none" stroke="#e0eeda" stroke-width="1.1"/></svg>
<div class="b" style="left:43.7px;top:18px;width:36.3px;height:15.5px;background:#f1f1f1;"></div>
<div class="t" style="left:9.00px;top:19.30px;font-size:8.4px;line-height:12px;color:#e6f0e4;letter-spacing:-0.034px;">Archivo</div>
<div class="t" style="left:50.50px;top:19.30px;font-size:8.4px;line-height:12px;color:#4f8650;letter-spacing:0.114px;">Home</div>
<div class="t" style="left:86.50px;top:19.30px;font-size:8.4px;line-height:12px;color:#e6f0e4;letter-spacing:-0.201px;">Insertar</div>
<div class="t" style="left:127.00px;top:19.30px;font-size:8.4px;line-height:12px;color:#e6f0e4;letter-spacing:-0.413px;">Esquema</div>
<div class="t" style="left:173.50px;top:19.30px;font-size:8.4px;line-height:12px;color:#e6f0e4;letter-spacing:-0.131px;">Formula</div>
<div class="t" style="left:217.30px;top:19.30px;font-size:8.4px;line-height:12px;color:#e6f0e4;letter-spacing:-0.338px;">Datos</div>
<div class="t" style="left:251.60px;top:19.30px;font-size:8.4px;line-height:12px;color:#e6f0e4;letter-spacing:-0.445px;">Review</div>
<div class="t" style="left:290.40px;top:19.30px;font-size:8.4px;line-height:12px;color:#e6f0e4;letter-spacing:-0.393px;">Ver</div>
<div class="b" style="left:0px;top:33px;width:1024px;height:59.5px;background:#f1f1f1;"></div>
<div class="b" style="left:0px;top:92px;width:1024px;height:12px;background:#ebebeb;"></div>
<div class="b" style="left:0px;top:104px;width:1024px;height:1px;background:#d0d0d0;"></div>
<div class="b" style="left:113.3px;top:36px;width:1px;height:67px;background:#d4d4d4;"></div>
<div class="b" style="left:255.3px;top:36px;width:1px;height:67px;background:#d4d4d4;"></div>
<div class="b" style="left:344.3px;top:36px;width:1px;height:67px;background:#d4d4d4;"></div>
<div class="b" style="left:425.3px;top:36px;width:1px;height:67px;background:#d4d4d4;"></div>
<div class="b" style="left:612.3px;top:36px;width:1px;height:67px;background:#d4d4d4;"></div>
<div class="b" style="left:730.3px;top:36px;width:1px;height:67px;background:#d4d4d4;"></div>
<div class="b" style="left:841px;top:36px;width:1px;height:67px;background:#d4d4d4;"></div>
<div class="b" style="left:947.3px;top:36px;width:1px;height:67px;background:#d4d4d4;"></div>
<div class="b" style="left:1004px;top:36px;width:1px;height:67px;background:#d4d4d4;"></div>
<svg class="b" style="left:9.5px;top:40px;" width="24" height="24" viewBox="0 0 24 24"><rect x="0.5" y="2.5" width="19.5" height="19" rx="2" fill="#fbd88c" stroke="#f3e3b4" stroke-width="1"/><rect x="6.5" y="0.6" width="7.5" height="3.2" rx="1" fill="#9a9a9a"/><path d="M13.2 10.6 H20 L22.3 12.9 V23.2 H13.2 Z" fill="#fff" stroke="#a0a0a0" stroke-width="0.9"/></svg>
<div class="t" style="left:9.90px;top:66.10px;font-size:8.4px;line-height:12px;color:#3a3a3a;letter-spacing:-0.432px;">Pegar</div>
<svg class="b" style="left:16.5px;top:79.9px;" width="8" height="5.0" viewBox="0 0 8 5.0"><path d="M1 1 L4.0 4.0 L7 1" fill="none" stroke="#5a5a5a" stroke-width="1.15"/></svg>
<svg class="b" style="left:41px;top:39.5px;" width="11" height="11" viewBox="0 0 11 11"><path d="M2.3 0.6 L7.4 7 M8.7 0.6 L3.6 7" stroke="#777" stroke-width="1.2" fill="none"/><circle cx="2.5" cy="8.3" r="1.7" fill="none" stroke="#4f95d0" stroke-width="1.2"/><circle cx="8.5" cy="8.3" r="1.7" fill="none" stroke="#4f95d0" stroke-width="1.2"/></svg>
<div class="t" style="left:56.00px;top:39.20px;font-size:8.4px;line-height:12px;color:#3a3a3a;letter-spacing:-0.080px;">Cortar</div>
<svg class="b" style="left:41px;top:56.5px;" width="12" height="12" viewBox="0 0 12 12"><path d="M4.5 0.5 H8.6 L10.8 2.7 V8.8 H4.5 Z" fill="#fafafa" stroke="#8a8a8a" stroke-width="0.9"/><path d="M0.6 3 H4.8 L7 5.2 V11.3 H0.6 Z" fill="#fafafa" stroke="#8a8a8a" stroke-width="0.9"/><path d="M2 7.2 H5.5 M2 9 H5.5" stroke="#bbb" stroke-width="0.7"/></svg>
<div class="t" style="left:56.00px;top:56.20px;font-size:8.4px;line-height:12px;color:#3a3a3a;letter-spacing:-0.112px;">Copiar</div>
<svg class="b" style="left:40.5px;top:73.5px;" width="12" height="12" viewBox="0 0 12 12"><path d="M7.2 3.8 L10.3 0.7 L11.3 1.7 L8.2 4.8 Z" fill="#3f86c2"/><path d="M5.8 3.2 L8.8 6.2 L7.6 7.4 L4.6 4.4 Z" fill="#8f8f8f"/><path d="M4.4 4.6 L7.4 7.6 L3.6 10.8 L0.5 7.2 Z" fill="#f4cf82"/></svg>
<div class="t" style="left:56.00px;top:73.00px;font-size:8.4px;line-height:12px;color:#3a3a3a;letter-spacing:-0.091px;">Format painter</div>
<div class="t" style="left:46.85px;top:93.00px;font-size:8.4px;line-height:12px;color:#555;letter-spacing:-0.265px;">Editar</div>
<div class="b" style="left:116.2px;top:42.2px;width:97.6px;height:14.3px;background:#fff;border:1px solid #c3cfe0;box-sizing:border-box;"></div><div class="t" style="left:118.10px;top:43.65px;font-size:8.4px;line-height:12px;color:#222;letter-spacing:-0.053px;">Arial</div><svg class="b" style="left:204.10000000000002px;top:47.1px;" width="8.2" height="5.1" viewBox="0 0 8.2 5.1"><path d="M1 1 L4.1 4.1 L7.2 1" fill="none" stroke="#555" stroke-width="1.15"/></svg>
<div class="b" style="left:217.4px;top:42.2px;width:34.8px;height:14.3px;background:#fff;border:1px solid #c3cfe0;box-sizing:border-box;"></div><div class="t" style="left:219.30px;top:43.65px;font-size:8.4px;line-height:12px;color:#222;letter-spacing:-0.664px;">10</div><svg class="b" style="left:242.5px;top:47.1px;" width="8.2" height="5.1" viewBox="0 0 8.2 5.1"><path d="M1 1 L4.1 4.1 L7.2 1" fill="none" stroke="#555" stroke-width="1.15"/></svg>
<div class="t" style="left:120.45px;top:66.30px;font-size:9px;line-height:13px;color:#333;font-weight:700;">N</div>
<div class="t" style="left:139.75px;top:66.30px;font-size:9px;line-height:13px;color:#333;font-weight:700;font-style:italic;">K</div>
<div class="t" style="left:159.49px;top:66.30px;font-size:9px;line-height:13px;color:#333;font-weight:700;text-decoration:underline;">S</div>
<svg class="b" style="left:172.0px;top:70.5px;" width="8" height="5.0" viewBox="0 0 8 5.0"><path d="M1 1 L4.0 4.0 L7 1" fill="none" stroke="#5a5a5a" stroke-width="1.15"/></svg>
<div class="t" style="left:188.83px;top:65.00px;font-size:9.5px;line-height:13px;color:#333;">A</div>
<div class="b" style="left:186px;top:75.5px;width:12.8px;height:2.2px;background:#e0182d;"></div>
<svg class="b" style="left:201.7px;top:70.5px;" width="8" height="5.0" viewBox="0 0 8 5.0"><path d="M1 1 L4.0 4.0 L7 1" fill="none" stroke="#5a5a5a" stroke-width="1.15"/></svg>
<div class="b" style="left:214.3px;top:65px;width:1px;height:16px;background:#d0d0d0;"></div>
<div class="t" style="left:221.16px;top:66.00px;font-size:10px;line-height:14px;color:#333;">A</div>
<div class="t" style="left:227.44px;top:63.70px;font-size:6px;line-height:9px;color:#2a7ab8;font-weight:700;">+</div>
<div class="t" style="left:240.16px;top:67.50px;font-size:8.5px;line-height:12px;color:#333;">A</div>
<div class="t" style="left:246.30px;top:64.10px;font-size:6px;line-height:9px;color:#2a7ab8;font-weight:700;">-</div>
<div class="t" style="left:159.95px;top:93.00px;font-size:8.4px;line-height:12px;color:#555;letter-spacing:-0.347px;">Caracteres</div>
<svg class="b" style="left:248px;top:96.6px;" width="6" height="6" viewBox="0 0 6 6"><path d="M5.6 0.2 L5.6 5.6 L0.2 5.6 Z" fill="#858585"/></svg>
<div class="b" style="left:291.7px;top:37px;width:15.8px;height:15.5px;background:#dcdcdc;"></div>
<div class="b" style="left:257.5px;top:72.3px;width:16.3px;height:15.7px;background:#dcdcdc;"></div>
<svg class="b" style="left:260.4px;top:40.3px;" width="10" height="6" viewBox="0 0 10 6"><path d="M0.80 1.20 H9.20" stroke="#858585" stroke-width="1.25"/><path d="M1.70 3.00 H8.30" stroke="#858585" stroke-width="1.25"/><path d="M2.30 4.80 H7.70" stroke="#858585" stroke-width="1.25"/></svg>
<svg class="b" style="left:277.6px;top:42px;" width="10" height="6" viewBox="0 0 10 6"><path d="M0.80 1.20 H9.20" stroke="#858585" stroke-width="1.25"/><path d="M1.70 3.00 H8.30" stroke="#858585" stroke-width="1.25"/><path d="M2.30 4.80 H7.70" stroke="#858585" stroke-width="1.25"/></svg>
<svg class="b" style="left:295px;top:43.3px;" width="10" height="6" viewBox="0 0 10 6"><path d="M2.30 1.20 H7.70" stroke="#858585" stroke-width="1.25"/><path d="M1.70 3.00 H8.30" stroke="#858585" stroke-width="1.25"/><path d="M0.80 4.80 H9.20" stroke="#858585" stroke-width="1.25"/></svg>
<svg class="b" style="left:312.4px;top:40.5px;" width="9" height="10" viewBox="0 0 9 10"><path d="M0 0.7 H8.8" stroke="#8a8a8a" stroke-width="0.9"/><path d="M1.8 3.2 H7.1" stroke="#8a8a8a" stroke-width="0.9"/><path d="M0 6.1 H8.8" stroke="#8a8a8a" stroke-width="0.9"/><path d="M1.8 8.9 H7.1" stroke="#8a8a8a" stroke-width="0.9"/></svg>
<svg class="b" style="left:260.2px;top:57.3px;" width="11" height="11" viewBox="0 0 11 11"><rect x="0.5" y="0.5" width="9.8" height="9.8" fill="#fff" stroke="#7a7a7a" stroke-width="0.9"/><path d="M1.6 2.3 H9.2" stroke="#c4c4c4" stroke-width="0.7"/></svg>
<svg class="b" style="left:274.0px;top:60.3px;" width="8" height="5.0" viewBox="0 0 8 5.0"><path d="M1 1 L4.0 4.0 L7 1" fill="none" stroke="#5a5a5a" stroke-width="1.15"/></svg>
<svg class="b" style="left:289.2px;top:57.6px;" width="12" height="10" viewBox="0 0 12 10"><path d="M0 0.6 H11.6" stroke="#d9b27a" stroke-width="0.9"/><path d="M0 3.2 H11.6 M0 5.8 H6.4 M0 8.4 H5.4" stroke="#5a96cf" stroke-width="0.9"/><path d="M11.2 3.2 V7 H9" stroke="#8a8a8a" stroke-width="0.8" fill="none"/><circle cx="8" cy="7.3" r="1.5" fill="#3f86c9"/></svg>
<svg class="b" style="left:306.2px;top:57.2px;" width="12" height="11" viewBox="0 0 12 11"><rect x="0.5" y="0.5" width="10.6" height="9.6" fill="#fff" stroke="#9a8f86" stroke-width="0.9"/><path d="M0.5 3.4 H11.1 M0.5 7.2 H11.1" stroke="#4a90d0" stroke-width="1"/><path d="M5.8 0.5 V3.4 M5.8 7.2 V10.1" stroke="#7aaee0" stroke-width="0.8"/></svg>
<svg class="b" style="left:322.2px;top:60.3px;" width="8" height="5.0" viewBox="0 0 8 5.0"><path d="M1 1 L4.0 4.0 L7 1" fill="none" stroke="#5a5a5a" stroke-width="1.15"/></svg>
<svg class="b" style="left:260.6px;top:74.3px;" width="13" height="13" viewBox="0 0 13 13"><text x="0.2" y="9" font-family="Liberation Sans, sans-serif" font-size="8.2" font-weight="700" fill="#4a4a4a">T1</text><path d="M0.2 1.6 L1.6 0.2 L3 1.6 Z" fill="#5a9fd6"/><path d="M6.6 9.8 L8 11.2 L9.4 9.8 Z" fill="#5a9fd6"/></svg>
<svg class="b" style="left:278.3px;top:76.2px;" width="9" height="8" viewBox="0 0 9 8"><path d="M0 0.7 H8.6" stroke="#868686" stroke-width="1.35"/><path d="M0 2.8 H6.4" stroke="#868686" stroke-width="1.35"/><path d="M0 4.9 H8.6" stroke="#868686" stroke-width="1.35"/><path d="M0 7.0 H6.4" stroke="#868686" stroke-width="1.35"/></svg>
<svg class="b" style="left:295.59999999999997px;top:76.2px;" width="9" height="8" viewBox="0 0 9 8"><path d="M0 0.7 H8.6" stroke="#868686" stroke-width="1.35"/><path d="M1.1 2.8 H7.5" stroke="#868686" stroke-width="1.35"/><path d="M0 4.9 H8.6" stroke="#868686" stroke-width="1.35"/><path d="M1.1 7.0 H7.5" stroke="#868686" stroke-width="1.35"/></svg>
<svg class="b" style="left:312.3px;top:76.2px;" width="9" height="8" viewBox="0 0 9 8"><path d="M0 0.7 H8.6" stroke="#868686" stroke-width="1.35"/><path d="M2.2 2.8 H8.6" stroke="#868686" stroke-width="1.35"/><path d="M0 4.9 H8.6" stroke="#868686" stroke-width="1.35"/><path d="M2.2 7.0 H8.6" stroke="#868686" stroke-width="1.35"/></svg>
<svg class="b" style="left:329.5px;top:76.2px;" width="9" height="8" viewBox="0 0 9 8"><path d="M0 0.7 H8.6" stroke="#868686" stroke-width="1.35"/><path d="M0 2.8 H8.6" stroke="#868686" stroke-width="1.35"/><path d="M0 4.9 H8.6" stroke="#868686" stroke-width="1.35"/><path d="M0 7.0 H8.6" stroke="#868686" stroke-width="1.35"/></svg>
<div class="t" style="left:274.85px;top:93.00px;font-size:8.4px;line-height:12px;color:#555;letter-spacing:-0.036px;">Alineación</div>
<svg class="b" style="left:337px;top:96.6px;" width="6" height="6" viewBox="0 0 6 6"><path d="M5.6 0.2 L5.6 5.6 L0.2 5.6 Z" fill="#858585"/></svg>
<div class="b" style="left:347px;top:42.2px;width:75.5px;height:14.3px;background:#fff;border:1px solid #c3cfe0;box-sizing:border-box;"></div><div class="t" style="left:348.90px;top:43.65px;font-size:8.4px;line-height:12px;color:#222;letter-spacing:-0.379px;">Estándar</div><svg class="b" style="left:412.79999999999995px;top:47.1px;" width="8.2" height="5.1" viewBox="0 0 8.2 5.1"><path d="M1 1 L4.1 4.1 L7.2 1" fill="none" stroke="#555" stroke-width="1.15"/></svg>
<div class="t" style="left:350.31px;top:64.10px;font-size:11px;line-height:15px;color:#4a4a4a;">%</div>
<svg class="b" style="left:367.5px;top:65px;" width="14" height="13" viewBox="0 0 14 13"><rect x="0.5" y="0.8" width="10" height="6.4" rx="0.8" fill="#5aa02c"/><text x="3.3" y="6.3" font-family="Liberation Sans, sans-serif" font-size="6" font-weight="700" fill="#e8f5d8">€</text><ellipse cx="8" cy="9.2" rx="4" ry="2.6" fill="#e89a3c"/><ellipse cx="6.2" cy="6.6" rx="3.6" ry="2.3" fill="#f0b050"/><text x="5" y="11" font-family="Liberation Sans, sans-serif" font-size="5" font-weight="700" fill="#fff3d8">$</text></svg>
<div class="b" style="left:385.3px;top:64px;width:1px;height:16px;background:#d0d0d0;"></div>
<svg class="b" style="left:390.2px;top:66.8px;" width="12" height="12" viewBox="0 0 12 12"><text x="3.2" y="4.4" font-family="Liberation Sans, sans-serif" font-size="4.9" fill="#555" textLength="6.6">.00</text><text x="5.6" y="9.4" font-family="Liberation Sans, sans-serif" font-size="4.9" fill="#555" textLength="4">.0</text><path d="M0.3 7.6 H3.6" stroke="#2f7fc1" stroke-width="1.1"/><path d="M3 5.8 L5.2 7.6 L3 9.4 Z" fill="#2f7fc1"/></svg>
<svg class="b" style="left:410.4px;top:66.8px;" width="12" height="12" viewBox="0 0 12 12"><text x="6" y="4.4" font-family="Liberation Sans, sans-serif" font-size="4.9" fill="#555" textLength="4">.0</text><text x="3.2" y="9.4" font-family="Liberation Sans, sans-serif" font-size="4.9" fill="#555" textLength="6.6">.00</text><path d="M1.8 2.6 H5.2" stroke="#2f7fc1" stroke-width="1.1"/><path d="M2.4 0.8 L0.2 2.6 L2.4 4.4 Z" fill="#2f7fc1"/></svg>
<div class="t" style="left:365.00px;top:93.00px;font-size:8.4px;line-height:12px;color:#555;letter-spacing:0.034px;">Number</div>
<svg class="b" style="left:418.7px;top:96.6px;" width="6" height="6" viewBox="0 0 6 6"><path d="M5.6 0.2 L5.6 5.6 L0.2 5.6 Z" fill="#858585"/></svg>
<svg class="b" style="left:438px;top:38.5px;" width="20" height="20" viewBox="0 0 20 20"><path d="M10.6 6.4 Q17.8 7.6 17.6 13.6 Q17.4 16.4 15.2 17.2 Q16.2 12.6 12.2 9.8 Z" fill="#2e86c9"/><path d="M7.6 4.4 L14.4 11.8 L8 17.8 L2.3 11.8 Z" fill="#fdfdfd" stroke="#7a7a7a" stroke-width="0.9"/><path d="M7.6 4.6 V3" stroke="#7a7a7a" stroke-width="0.9"/><circle cx="8.6" cy="9" r="0.7" fill="#8a8a8a"/></svg>
<div class="b" style="left:435px;top:58.7px;width:25px;height:4.6px;background:#f7f294;"></div>
<div class="t" style="left:433.30px;top:66.10px;font-size:8.4px;line-height:12px;color:#3a3a3a;letter-spacing:-0.279px;">Shading</div>
<svg class="b" style="left:444.0px;top:79.9px;" width="8" height="5.0" viewBox="0 0 8 5.0"><path d="M1 1 L4.0 4.0 L7 1" fill="none" stroke="#5a5a5a" stroke-width="1.15"/></svg>
<svg class="b" style="left:478px;top:41.2px;" width="20" height="20" viewBox="0 0 20 20"><rect x="0.5" y="0.5" width="19" height="18.8" fill="#fff" stroke="#7a7a7a" stroke-width="1"/><path d="M10 1 V19 M1 9.9 H19.4" stroke="#a8a8a8" stroke-width="0.8"/></svg>
<div class="t" style="left:474.60px;top:66.10px;font-size:8.4px;line-height:12px;color:#3a3a3a;letter-spacing:-0.361px;">Borders</div>
<svg class="b" style="left:484.3px;top:79.9px;" width="8" height="5.0" viewBox="0 0 8 5.0"><path d="M1 1 L4.0 4.0 L7 1" fill="none" stroke="#5a5a5a" stroke-width="1.15"/></svg>
<svg class="b" style="left:528px;top:40.4px;" width="23" height="21" viewBox="0 0 23 21"><rect x="0.4" y="0.4" width="20.4" height="16.8" fill="#fff" stroke="#9a9a9a" stroke-width="0.8"/><path d="M5.6 0.4 V17.2 M12 0.4 V17.2 M15.6 0.4 V17.2 M0.4 4.6 H20.8 M0.4 8.8 H20.8 M0.4 13 H20.8" stroke="#b0b0b0" stroke-width="0.7"/><rect x="5.8" y="0.8" width="6" height="3.6" fill="#c8dc3c"/><rect x="5.8" y="5" width="8" height="3.6" fill="#6aa0e8"/><rect x="5.8" y="9.2" width="7" height="3.6" fill="#c8dc3c"/><rect x="5.8" y="13.4" width="5" height="3.6" fill="#6aa0e8"/><rect x="11.3" y="11.6" width="10.4" height="8.8" rx="1" fill="#f6f6f6" stroke="#8a8a8a" stroke-width="0.8"/><text x="13.4" y="16" font-family="Liberation Sans, sans-serif" font-size="4.4" font-weight="700" fill="#666">&lt;</text><text x="12.4" y="19.6" font-family="Liberation Sans, sans-serif" font-size="4.4" font-weight="700" fill="#666">=&gt;</text></svg>
<div class="t" style="left:523.65px;top:66.10px;font-size:8.4px;line-height:12px;color:#3a3a3a;letter-spacing:-0.127px;">Formato</div>
<div class="t" style="left:513.70px;top:76.40px;font-size:8.4px;line-height:12px;color:#3a3a3a;letter-spacing:0.054px;">condicional</div>
<svg class="b" style="left:557.5px;top:80.2px;" width="8" height="5.0" viewBox="0 0 8 5.0"><path d="M1 1 L4.0 4.0 L7 1" fill="none" stroke="#5a5a5a" stroke-width="1.15"/></svg>
<svg class="b" style="left:580px;top:41px;" width="24" height="21" viewBox="0 0 24 21"><rect x="0.4" y="1.3" width="19.4" height="17" fill="#fff" stroke="#9a9a9a" stroke-width="0.8"/><rect x="0.4" y="1.3" width="19.4" height="3.4" fill="#5a96e2"/><path d="M5.2 4.7 V18.3 M10.4 4.7 V18.3 M15.4 4.7 V18.3 M0.4 8.1 H19.8 M0.4 11.7 H19.8 M0.4 15.2 H19.8" stroke="#b0b0b0" stroke-width="0.7"/><rect x="5.4" y="8.3" width="5" height="3.4" fill="#6aa5e6"/><path d="M17 11 L21.4 6.6 L22.6 7.8 L18.4 12.4 Z" fill="#a8a8a8"/><path d="M15.6 11 L18.6 13.4 Q15.6 18.6 9.6 19.6 Q13.4 15.6 15.6 11 Z" fill="#6aa5e6"/></svg>
<div class="t" style="left:583.85px;top:66.10px;font-size:8.4px;line-height:12px;color:#3a3a3a;letter-spacing:-0.284px;">Cell</div>
<div class="t" style="left:576.20px;top:76.40px;font-size:8.4px;line-height:12px;color:#3a3a3a;letter-spacing:-0.270px;">styles</div>
<svg class="b" style="left:597.7px;top:80.2px;" width="8" height="5.0" viewBox="0 0 8 5.0"><path d="M1 1 L4.0 4.0 L7 1" fill="none" stroke="#5a5a5a" stroke-width="1.15"/></svg>
<div class="t" style="left:503.65px;top:93.00px;font-size:8.4px;line-height:12px;color:#555;letter-spacing:-0.070px;">Formato</div>
<svg class="b" style="left:622px;top:41px;" width="23" height="20" viewBox="0 0 23 20"><rect x="0.5" y="0.5" width="12.5" height="7" fill="#fff" stroke="#a4a4a4" stroke-width="0.8"/><path d="M4.67 0.5 V7.5" stroke="#a4a4a4" stroke-width="0.7"/><path d="M8.83 0.5 V7.5" stroke="#a4a4a4" stroke-width="0.7"/><path d="M0.5 4.00 H13.0" stroke="#a4a4a4" stroke-width="0.7"/><rect x="0.5" y="12" width="12.5" height="7" fill="#fff" stroke="#a4a4a4" stroke-width="0.8"/><path d="M4.67 12 V19" stroke="#a4a4a4" stroke-width="0.7"/><path d="M8.83 12 V19" stroke="#a4a4a4" stroke-width="0.7"/><path d="M0.5 15.50 H13.0" stroke="#a4a4a4" stroke-width="0.7"/><rect x="9" y="8.3" width="12.5" height="3" fill="#fff" stroke="#4a8fdc" stroke-width="0.9"/><path d="M4.5 9.8 H9" stroke="#2f7fc1" stroke-width="1.2"/><path d="M5.8 7.9 L3.2 9.8 L5.8 11.7 Z" fill="#2f7fc1"/></svg>
<div class="t" style="left:622.20px;top:66.10px;font-size:8.4px;line-height:12px;color:#3a3a3a;letter-spacing:-0.226px;">Insert</div>
<svg class="b" style="left:629.0px;top:79.9px;" width="8" height="5.0" viewBox="0 0 8 5.0"><path d="M1 1 L4.0 4.0 L7 1" fill="none" stroke="#5a5a5a" stroke-width="1.15"/></svg>
<svg class="b" style="left:658.5px;top:41px;" width="23" height="20" viewBox="0 0 23 20"><rect x="0.5" y="0.5" width="12.5" height="7" fill="#fff" stroke="#a4a4a4" stroke-width="0.8"/><path d="M4.67 0.5 V7.5" stroke="#a4a4a4" stroke-width="0.7"/><path d="M8.83 0.5 V7.5" stroke="#a4a4a4" stroke-width="0.7"/><path d="M0.5 4.00 H13.0" stroke="#a4a4a4" stroke-width="0.7"/><rect x="0.5" y="12" width="12.5" height="7" fill="#fff" stroke="#a4a4a4" stroke-width="0.8"/><path d="M4.67 12 V19" stroke="#a4a4a4" stroke-width="0.7"/><path d="M8.83 12 V19" stroke="#a4a4a4" stroke-width="0.7"/><path d="M0.5 15.50 H13.0" stroke="#a4a4a4" stroke-width="0.7"/><rect x="8" y="8.3" width="7" height="3" fill="#fff" stroke="#e04050" stroke-width="0.9"/><path d="M2.2 9.8 H6" stroke="#d03040" stroke-width="1.2"/><path d="M5.2 7.9 L7.8 9.8 L5.2 11.7 Z" fill="#d03040"/><path d="M15.5 6.2 L22 13 M22 6.2 L15.5 13" stroke="#d62f3f" stroke-width="1.5"/></svg>
<div class="t" style="left:657.45px;top:66.10px;font-size:8.4px;line-height:12px;color:#3a3a3a;letter-spacing:-0.286px;">Delete</div>
<svg class="b" style="left:665.5px;top:79.9px;" width="8" height="5.0" viewBox="0 0 8 5.0"><path d="M1 1 L4.0 4.0 L7 1" fill="none" stroke="#5a5a5a" stroke-width="1.15"/></svg>
<svg class="b" style="left:697px;top:41px;" width="22" height="20" viewBox="0 0 22 20"><rect x="1.5" y="4" width="18.5" height="12" fill="#fbfbfb" stroke="#a8a8a8" stroke-width="0.8" stroke-dasharray="1.2 1"/><path d="M3.5 10 Q10.8 3.6 18 10 Q10.8 16.4 3.5 10 Z" fill="#fff" stroke="#5a8fd0" stroke-width="1"/><circle cx="10.8" cy="10" r="2.6" fill="#3f6fb8"/><path d="M3.5 15 L18.5 5" stroke="#e0404f" stroke-width="1.2"/></svg>
<div class="t" style="left:693.00px;top:66.10px;font-size:8.4px;line-height:12px;color:#3a3a3a;letter-spacing:-0.011px;">Visibility</div>
<svg class="b" style="left:704.5px;top:79.9px;" width="8" height="5.0" viewBox="0 0 8 5.0"><path d="M1 1 L4.0 4.0 L7 1" fill="none" stroke="#5a5a5a" stroke-width="1.15"/></svg>
<div class="t" style="left:659.45px;top:93.00px;font-size:8.4px;line-height:12px;color:#555;letter-spacing:-0.430px;">Celdas</div>
<svg class="b" style="left:744px;top:41.5px;" width="20" height="20" viewBox="0 0 20 20"><text x="0" y="8.6" font-family="Liberation Sans, sans-serif" font-size="10.5" font-weight="700" fill="#3f86c9">A</text><text x="0.3" y="19" font-family="Liberation Sans, sans-serif" font-size="10.5" font-weight="700" fill="#3f9a4a">Z</text><path d="M9.3 5.8 H19.6 L15.8 10.2 V16 L13.2 14.4 V10.2 Z" fill="#7a7a7a"/></svg>
<div class="t" style="left:738.20px;top:66.10px;font-size:8.4px;line-height:12px;color:#3a3a3a;letter-spacing:-0.209px;">Sort and</div>
<div class="t" style="left:741.70px;top:76.40px;font-size:8.4px;line-height:12px;color:#3a3a3a;letter-spacing:0.112px;">filter</div>
<svg class="b" style="left:759.0px;top:80.2px;" width="8" height="5.0" viewBox="0 0 8 5.0"><path d="M1 1 L4.0 4.0 L7 1" fill="none" stroke="#5a5a5a" stroke-width="1.15"/></svg>
<div class="t" style="left:779.59px;top:37.50px;font-size:11px;line-height:15px;color:#3d4d9a;font-family:"Liberation Serif",serif;">Σ</div>
<div class="t" style="left:792.50px;top:39.20px;font-size:8.4px;line-height:12px;color:#3a3a3a;letter-spacing:0.062px;">Autosum</div>
<svg class="b" style="left:829.7px;top:43.0px;" width="8" height="5.0" viewBox="0 0 8 5.0"><path d="M1 1 L4.0 4.0 L7 1" fill="none" stroke="#5a5a5a" stroke-width="1.15"/></svg>
<svg class="b" style="left:777.5px;top:56.5px;" width="12" height="12" viewBox="0 0 12 12"><rect x="0.5" y="0.8" width="9" height="3.2" fill="#fff" stroke="#8e8e8e" stroke-width="0.8"/><rect x="0.5" y="4" width="9" height="3.2" fill="#fff" stroke="#8e8e8e" stroke-width="0.8"/><path d="M8 5.5 V9.4" stroke="#2f7fc1" stroke-width="1.5"/><path d="M5.8 8.4 H10.2 L8 11.4 Z" fill="#2f7fc1"/></svg>
<div class="t" style="left:792.50px;top:56.20px;font-size:8.4px;line-height:12px;color:#3a3a3a;letter-spacing:-0.176px;">Fill</div>
<svg class="b" style="left:805.5px;top:60.0px;" width="8" height="5.0" viewBox="0 0 8 5.0"><path d="M1 1 L4.0 4.0 L7 1" fill="none" stroke="#5a5a5a" stroke-width="1.15"/></svg>
<svg class="b" style="left:777.5px;top:73.5px;" width="12" height="12" viewBox="0 0 12 12"><path d="M6.8 1.2 L10.8 4.4 L7.6 8.2 L3.6 5 Z" fill="#f59aa6"/><path d="M3.6 5 L7.6 8.2 L5.6 10.4 H3 L1 8 Z" fill="#fbfbfb" stroke="#b8b8b8" stroke-width="0.6"/><path d="M2.6 11.2 H9.4" stroke="#9a9a9a" stroke-width="0.7"/></svg>
<div class="t" style="left:792.50px;top:73.00px;font-size:8.4px;line-height:12px;color:#3a3a3a;letter-spacing:-0.286px;">Delete</div>
<svg class="b" style="left:818.0px;top:76.8px;" width="8" height="5.0" viewBox="0 0 8 5.0"><path d="M1 1 L4.0 4.0 L7 1" fill="none" stroke="#5a5a5a" stroke-width="1.15"/></svg>
<div class="t" style="left:769.45px;top:93.00px;font-size:8.4px;line-height:12px;color:#555;letter-spacing:-0.129px;">Contents</div>
<svg class="b" style="left:849.5px;top:40px;" width="24" height="24" viewBox="0 0 24 24"><path d="M13 13.4 L20.6 21" stroke="#6896ee" stroke-width="2" stroke-linecap="round"/><circle cx="8.4" cy="8.7" r="6.2" fill="#f8f8f8" stroke="#9c9c9c" stroke-width="1"/></svg>
<div class="t" style="left:849.65px;top:66.10px;font-size:8.4px;line-height:12px;color:#3a3a3a;letter-spacing:-0.463px;">Buscar</div>
<div class="t" style="left:881.70px;top:39.70px;font-size:7.8px;line-height:11px;color:#555;font-weight:700;">a</div>
<svg class="b" style="left:885.6px;top:43.7px;" width="4" height="4" viewBox="0 0 4 4"><path d="M0.5 0.3 L3.3 2 L0.5 3.7 Z" fill="#3a7fc0"/></svg>
<div class="t" style="left:889.50px;top:39.70px;font-size:7.8px;line-height:11px;color:#555;font-weight:700;">b</div>
<div class="t" style="left:897.50px;top:39.20px;font-size:8.4px;line-height:12px;color:#3a3a3a;letter-spacing:-0.346px;">Reemplazar</div>
<svg class="b" style="left:882.5px;top:56.5px;" width="12" height="12" viewBox="0 0 12 12"><path d="M6.2 6.4 L10.4 10.6" stroke="#5b8ee6" stroke-width="1.5" stroke-linecap="round"/><circle cx="4.2" cy="4.4" r="3.3" fill="#f8f8f8" stroke="#8a8a8a" stroke-width="0.9"/><path d="M7.6 1.2 L9.2 0.4 L9 2.2" stroke="#5b8ee6" stroke-width="0.7" fill="none"/></svg>
<div class="t" style="left:897.50px;top:56.20px;font-size:8.4px;line-height:12px;color:#3a3a3a;letter-spacing:-0.322px;">Search again</div>
<svg class="b" style="left:882.5px;top:75.7px;" width="10" height="7" viewBox="0 0 10 7"><path d="M0.5 3.5 H6" stroke="#3a7fc0" stroke-width="1.6"/><path d="M5.2 0.6 L9.3 3.5 L5.2 6.4 Z" fill="#3a7fc0"/></svg>
<div class="t" style="left:897.50px;top:73.00px;font-size:8.4px;line-height:12px;color:#3a3a3a;letter-spacing:-0.277px;">Ir a</div>
<div class="t" style="left:882.95px;top:93.00px;font-size:8.4px;line-height:12px;color:#555;letter-spacing:-0.463px;">Buscar</div>
<svg class="b" style="left:965px;top:39.5px;" width="22" height="22" viewBox="0 0 22 22"><rect x="1" y="1.5" width="16" height="13" fill="#fcfcfc" stroke="#4a90c8" stroke-width="0.9" stroke-dasharray="1.3 1"/><path d="M11.8 8.5 V19.2 L14.3 16.8 L16 20.4 L17.6 19.6 L15.9 16.2 H19.2 Z" fill="#fff" stroke="#8a8a8a" stroke-width="0.8"/></svg>
<div class="t" style="left:955.90px;top:66.10px;font-size:8.4px;line-height:12px;color:#3a3a3a;letter-spacing:-0.270px;">Seleccionar</div>
<div class="t" style="left:968.05px;top:76.40px;font-size:8.4px;line-height:12px;color:#3a3a3a;letter-spacing:0.047px;">todo</div>
<div class="t" style="left:959.90px;top:93.00px;font-size:8.4px;line-height:12px;color:#555;letter-spacing:-0.295px;">Selection</div>
<div class="b" style="left:0px;top:105px;width:1024px;height:18.5px;background:#f3f3f3;"></div>
<div class="b" style="left:4.3px;top:106.8px;width:61.2px;height:14px;background:#fff;border:1px solid #c3cfe0;box-sizing:border-box;"></div>
<div class="t" style="left:6.50px;top:108.00px;font-size:8.2px;line-height:12px;color:#222;letter-spacing:-0.984px;">U5</div>
<svg class="b" style="left:55.3px;top:111.45px;" width="8.2" height="5.1" viewBox="0 0 8.2 5.1"><path d="M1 1 L4.1 4.1 L7.2 1" fill="none" stroke="#555" stroke-width="1.15"/></svg>
<div class="t" style="left:73.86px;top:105.10px;font-size:12.5px;line-height:17px;color:#555;font-style:italic;font-family:"Liberation Serif",serif;">f</div>
<div class="t" style="left:77.42px;top:110.10px;font-size:7.5px;line-height:11px;color:#555;font-style:italic;font-family:"Liberation Serif",serif;">x</div>
<svg class="b" style="left:88.5px;top:110.5px;" width="8" height="7" viewBox="0 0 8 7"><path d="M1 3.6 L3 5.8 L7 1" fill="none" stroke="#bdbdbd" stroke-width="1.1"/></svg>
<svg class="b" style="left:106.5px;top:110.5px;" width="7" height="7" viewBox="0 0 7 7"><path d="M1 1 L6 6 M6 1 L1 6" fill="none" stroke="#bdbdbd" stroke-width="1.1"/></svg>
<div class="b" style="left:121.5px;top:106.8px;width:882px;height:14px;background:#fff;border:1px solid #c3cfe0;box-sizing:border-box;"></div>
<div class="t" style="left:1007.27px;top:104.50px;font-size:8px;line-height:12px;color:#666;">»</div>
<div class="b" style="left:0px;top:123.5px;width:1024px;height:19px;background:#f1f1f1;"></div>
<div class="b" style="left:0px;top:123px;width:1024px;height:1px;background:#e4e4e4;"></div>
<svg class="b" style="left:7.5px;top:129px;" width="9" height="8" viewBox="0 0 9 8"><path d="M0 1 H9 M0 4 H9 M0 7 H9" stroke="#666" stroke-width="1.1"/></svg>
<div class="b" style="left:23px;top:126.5px;width:1px;height:13px;background:#d6d6d6;"></div>
<div class="b" style="left:44.3px;top:126.5px;width:1px;height:13px;background:#d6d6d6;"></div>
<div class="b" style="left:105.3px;top:126.5px;width:1px;height:13px;background:#d6d6d6;"></div>
<div class="b" style="left:125px;top:126.5px;width:1px;height:13px;background:#d6d6d6;"></div>
<div class="b" style="left:201px;top:126.5px;width:1px;height:13px;background:#d6d6d6;"></div>
<svg class="b" style="left:28.5px;top:126.5px;" width="11" height="13" viewBox="0 0 11 13"><path d="M3 5 V1.8 Q3 0.8 4.2 0.8 Q5.4 0.8 5.4 1.8 V5 Q6 4.2 7 4.8 Q8 4.4 8.6 5.4 Q10 5.2 10 6.6 V9 Q10 12 7 12.3 H5 Q3 12.3 1.6 9.6 L0.6 7.6 Q0.4 6.4 1.6 6.6 L3 8 Z" fill="#fff" stroke="#808080" stroke-width="0.8"/><rect x="2.6" y="0.2" width="3.4" height="4.4" rx="1.6" fill="#7f9be6" opacity="0.9"/></svg>
<svg class="b" style="left:50px;top:127.5px;" width="10" height="11.5" viewBox="0 0 10 11.5"><path d="M0.6 0.6 H6.2 L9.2 3.6 V10.8 H0.6 Z" fill="#fff" stroke="#8a8a8a" stroke-width="0.9"/><path d="M6.2 0.6 V3.6 H9.2" fill="none" stroke="#8a8a8a" stroke-width="0.7"/></svg>
<svg class="b" style="left:64.2px;top:130.8px;" width="8" height="5.0" viewBox="0 0 8 5.0"><path d="M1 1 L4.0 4.0 L7 1" fill="none" stroke="#5a5a5a" stroke-width="1.15"/></svg>
<svg class="b" style="left:75.8px;top:128px;" width="13" height="11" viewBox="0 0 13 11"><path d="M0.5 10 V1.6 Q0.5 0.8 1.3 0.8 H4.4 L5.6 2.2 H10.4 V4" fill="#fbe3a6" stroke="#e9b55a" stroke-width="0.9"/><path d="M0.5 10 L2.6 4 H12.4 L10.4 10 Z" fill="#fbd88c" stroke="#e9b55a" stroke-width="0.9"/></svg>
<svg class="b" style="left:92.1px;top:130.8px;" width="8" height="5.0" viewBox="0 0 8 5.0"><path d="M1 1 L4.0 4.0 L7 1" fill="none" stroke="#5a5a5a" stroke-width="1.15"/></svg>
<svg class="b" style="left:109.2px;top:127.8px;" width="11" height="11" viewBox="0 0 11 11"><rect x="0.4" y="0.4" width="10.2" height="10.2" rx="0.8" fill="#5b8ee6" stroke="#3f6fc4" stroke-width="0.8"/><rect x="2.6" y="0.8" width="5.8" height="4" fill="#f4f6fb"/><rect x="3" y="7" width="5" height="3.6" fill="#e8ecf5"/><rect x="3.8" y="7.6" width="1.4" height="2.4" fill="#5b8ee6"/></svg>
<svg class="b" style="left:129.5px;top:128.5px;" width="11" height="9" viewBox="0 0 11 9"><path d="M2.2 4.4 Q5.6 0.6 8.6 3.2 Q10.2 5 8.8 8" fill="none" stroke="#2f7fc1" stroke-width="1.6"/><path d="M0.3 1.6 L1 6.4 L5.2 5 Z" fill="#2f7fc1"/></svg>
<svg class="b" style="left:144.8px;top:130.8px;" width="8" height="5.0" viewBox="0 0 8 5.0"><path d="M1 1 L4.0 4.0 L7 1" fill="none" stroke="#5a5a5a" stroke-width="1.15"/></svg>
<svg class="b" style="left:156.5px;top:128.5px;" width="11" height="9" viewBox="0 0 11 9"><path d="M8.8 4.4 Q5.4 0.6 2.4 3.2 Q0.8 5 2.2 8" fill="none" stroke="#c4c4c4" stroke-width="1.5"/><path d="M10.7 1.6 L10 6.4 L5.8 5 Z" fill="#c4c4c4"/></svg>
<svg class="b" style="left:172.0px;top:130.8px;" width="8" height="5.0" viewBox="0 0 8 5.0"><path d="M1 1 L4.0 4.0 L7 1" fill="none" stroke="#aaa" stroke-width="1.15"/></svg>
<svg class="b" style="left:185px;top:128.5px;" width="11" height="9" viewBox="0 0 11 9"><path d="M8.8 4.4 Q5.4 0.6 2.4 3.2 Q0.8 5 2.2 8" fill="none" stroke="#c4c4c4" stroke-width="1.5"/><path d="M10.7 1.6 L10 6.4 L5.8 5 Z" fill="#c4c4c4"/></svg>
<svg class="b" style="left:207.5px;top:127.5px;" width="8" height="12" viewBox="0 0 8 12"><path d="M0.8 0.8 V9.4 L2.9 7.5 L4.4 10.8 L5.6 10.2 L4.2 7 H7 Z" fill="#fff" stroke="#777" stroke-width="0.8"/></svg>
<div class="t" style="left:221.43px;top:124.30px;font-size:8.5px;line-height:12px;color:#555;">»</div>
<div class="b" style="left:239.5px;top:126.5px;width:136.3px;height:16px;background:#fff;border:1px solid #d8d8d8;box-sizing:border-box;border-bottom:none;"></div>
<svg class="b" style="left:243.5px;top:129px;" width="9" height="11" viewBox="0 0 9 11"><path d="M0.5 0.5 H6 L8.5 3 V10.5 H0.5 Z" fill="#5aaa46"/><rect x="2" y="4.6" width="5" height="4.4" fill="#cdeac8"/><path d="M2 6.8 H7 M4.5 4.6 V9" stroke="#5aaa46" stroke-width="0.7"/></svg>
<div class="t" style="left:257.80px;top:128.90px;font-size:8.5px;line-height:12px;color:#222;letter-spacing:-0.217px;">planmaker_world_populat...</div>
<svg class="b" style="left:363.2px;top:132px;" width="6" height="6" viewBox="0 0 6 6"><path d="M0.6 0.6 L5.4 5.4 M5.4 0.6 L0.6 5.4" stroke="#444" stroke-width="1"/></svg>
<div class="b" style="left:1013.8px;top:142.5px;width:10.2px;height:520.5px;background:#ececec;"></div>
<div class="b" style="left:1013.8px;top:154px;width:10.2px;height:189.5px;background:#c9c9c9;"></div>
<svg class="b" style="left:1015.5px;top:145.5px;" width="7" height="5" viewBox="0 0 7 5"><path d="M0.8 4 L3.5 1.2 L6.2 4" fill="none" stroke="#333" stroke-width="1.1"/></svg>
<svg class="b" style="left:1015.5px;top:631px;" width="7" height="5" viewBox="0 0 7 5"><path d="M0.8 1 L3.5 3.8 L6.2 1" fill="none" stroke="#333" stroke-width="1.1"/></svg>
<div class="b" style="left:1013.8px;top:638px;width:10.2px;height:40px;background:#f0f0f0;"></div>
<svg class="b" style="left:1016px;top:640.3px;" width="6" height="6" viewBox="0 0 6 6"><path d="M3 0.6 L5 3 H1 Z M1 4.2 H5" fill="#333" stroke="#333" stroke-width="0.7"/></svg>
<svg class="b" style="left:1016.2px;top:649.3px;" width="5" height="5" viewBox="0 0 5 5"><circle cx="2.5" cy="2.5" r="1.7" fill="#e0185a"/></svg>
<svg class="b" style="left:1016px;top:657.6px;" width="6" height="6" viewBox="0 0 6 6"><path d="M3 5.4 L5 3 H1 Z M1 1.8 H5" fill="#333" stroke="#333" stroke-width="0.7"/></svg>
<svg class="b" style="left:1015px;top:666.5px;" width="8" height="8" viewBox="0 0 8 8"><path d="M0.5 0.8 H7.5 M0.8 0.5 V7.5" stroke="#555" stroke-width="0.9"/><path d="M2.4 2.4 L6.6 6.6 M2.4 2.4 H5 M2.4 2.4 V5" stroke="#333" stroke-width="0.9" fill="none"/></svg>
<div class="b" style="left:0px;top:662.6px;width:1013.8px;height:15.4px;background:#f0f0f0;"></div>
<div class="b" style="left:0px;top:662.2px;width:505px;height:1.1px;background:#555;"></div>
<div class="b" style="left:505px;top:662.6px;width:508.8px;height:1px;background:#dcdcdc;"></div>
<div class="b" style="left:14px;top:664.5px;width:1px;height:11.5px;background:#d8d8d8;"></div>
<div class="b" style="left:29.2px;top:664.5px;width:1px;height:11.5px;background:#d8d8d8;"></div>
<div class="b" style="left:44.2px;top:664.5px;width:1px;height:11.5px;background:#d8d8d8;"></div>
<svg class="b" style="left:2.3px;top:667.6px;" width="7" height="6" viewBox="0 0 7 6"><path d="M0.8 0.4 V5.6" stroke="#1a1a1a" stroke-width="1.3"/><path d="M1.4 3 L4.4 0.4 V2.2 H6.8 V3.8 H4.4 V5.6 Z" fill="#1a1a1a"/></svg>
<svg class="b" style="left:17.7px;top:667.6px;" width="7" height="6" viewBox="0 0 7 6"><path d="M0.6 3 L3.8 0.4 V2.2 H6.4 V3.8 H3.8 V5.6 Z" fill="#1a1a1a"/></svg>
<svg class="b" style="left:32.5px;top:667.6px;" width="7" height="6" viewBox="0 0 7 6"><path d="M6.4 3 L3.2 0.4 V2.2 H0.6 V3.8 H3.2 V5.6 Z" fill="#1a1a1a"/></svg>
<svg class="b" style="left:47.3px;top:667.6px;" width="7" height="6" viewBox="0 0 7 6"><path d="M6.2 0.4 V5.6" stroke="#1a1a1a" stroke-width="1.3"/><path d="M5.6 3 L2.6 0.4 V2.2 H0.2 V3.8 H2.6 V5.6 Z" fill="#1a1a1a"/></svg>
<div class="b" style="left:61px;top:661.8px;width:17px;height:14.2px;background:#fff;border:1px solid #444;box-sizing:border-box;border-top:none;border-bottom:1.6px solid #222;"></div>
<div class="t" style="left:63.35px;top:664.70px;font-size:7.4px;line-height:11px;color:#333;letter-spacing:0.052px;font-weight:700;">«1»</div>
<svg class="b" style="left:82.3px;top:664.8px;" width="13" height="12" viewBox="0 0 13 12"><rect x="0.5" y="0.5" width="10" height="9" fill="#fff" stroke="#a0a0a0" stroke-width="0.8"/><path d="M3.8 0.5 V9.5 M7.2 0.5 V9.5 M0.5 3.5 H10.5 M0.5 6.5 H10.5" stroke="#b0b0b0" stroke-width="0.6"/><circle cx="10" cy="9.6" r="1.7" fill="#f5a623"/></svg>
<div class="b" style="left:505.5px;top:663.6px;width:508px;height:14px;background:#efefef;"></div>
<div class="b" style="left:519.5px;top:665.8px;width:221.5px;height:9.3px;background:#c9c9c9;"></div>
<svg class="b" style="left:511.5px;top:667px;" width="5" height="7" viewBox="0 0 5 7"><path d="M4 0.8 L1.2 3.5 L4 6.2" fill="none" stroke="#222" stroke-width="1.2"/></svg>
<svg class="b" style="left:1003.5px;top:667px;" width="5" height="7" viewBox="0 0 5 7"><path d="M1 0.8 L3.8 3.5 L1 6.2" fill="none" stroke="#222" stroke-width="1.2"/></svg>
<div class="b" style="left:0px;top:678px;width:1024px;height:18px;background:#f0f0f0;"></div>
<div class="b" style="left:0px;top:677.6px;width:1024px;height:1px;background:#dcdcdc;"></div>
<div class="b" style="left:5px;top:680px;width:574px;height:12.2px;background:#fff;border:1px solid #e2e2e2;box-sizing:border-box;"></div>
<div class="t" style="left:7.30px;top:680.40px;font-size:8.3px;line-height:12px;color:#484848;letter-spacing:-0.143px;">Diagramm3</div>
<div class="b" style="left:585px;top:680px;width:107.5px;height:12.2px;background:#fff;border:1px solid #e2e2e2;box-sizing:border-box;"></div>
<div class="t" style="left:587.50px;top:680.00px;font-size:8.2px;line-height:12px;color:#222;">1</div>
<div class="b" style="left:696.8px;top:680px;width:94.8px;height:12.2px;background:#fff;border:1px solid #e2e2e2;box-sizing:border-box;"></div>
<svg class="b" style="left:796.5px;top:681px;" width="11" height="11" viewBox="0 0 11 11"><path d="M1.6 5 Q2 1.6 5.6 1.6 H7 V0.2 L9.8 2.6 L7 5 V3.6 H5.6 Q3.6 3.6 3.4 5 Z M9.4 6 Q9 9.4 5.4 9.4 H4 V10.8 L1.2 8.4 L4 6 V7.4 H5.4 Q7.4 7.4 7.6 6 Z" fill="#c6c6c6"/></svg>
<div class="b" style="left:813.4px;top:680px;width:25.2px;height:12.2px;background:#fff;border:1px solid #e2e2e2;box-sizing:border-box;"></div>
<div class="t" style="left:819.65px;top:680.20px;font-size:8px;line-height:12px;color:#222;letter-spacing:-0.281px;">INS</div>
<div class="b" style="left:843.6px;top:680px;width:26.3px;height:12.2px;background:#fff;border:1px solid #e2e2e2;box-sizing:border-box;"></div>
<div class="t" style="left:845.85px;top:680.20px;font-size:8px;line-height:12px;color:#222;letter-spacing:-0.145px;">AUTO</div>
<div class="b" style="left:878px;top:685.6px;width:5px;height:1px;background:#999;"></div>
<div class="b" style="left:885.6px;top:685.6px;width:78.3px;height:1px;background:#c8c8c8;"></div>
<svg class="b" style="left:920.5px;top:682px;" width="8" height="8" viewBox="0 0 8 8"><circle cx="4" cy="4" r="3" fill="#fff" stroke="#666" stroke-width="0.9"/></svg>
<svg class="b" style="left:966px;top:683px;" width="6" height="6" viewBox="0 0 6 6"><path d="M0.5 3 H5.5 M3 0.5 V5.5" stroke="#999" stroke-width="1"/></svg>
<div class="t" style="left:984.00px;top:680.20px;font-size:8px;line-height:12px;color:#222;letter-spacing:-0.367px;">100%</div>
<div class="t" style="left:1008.77px;top:677.20px;font-size:8px;line-height:12px;color:#666;">»</div>
</body></html>
